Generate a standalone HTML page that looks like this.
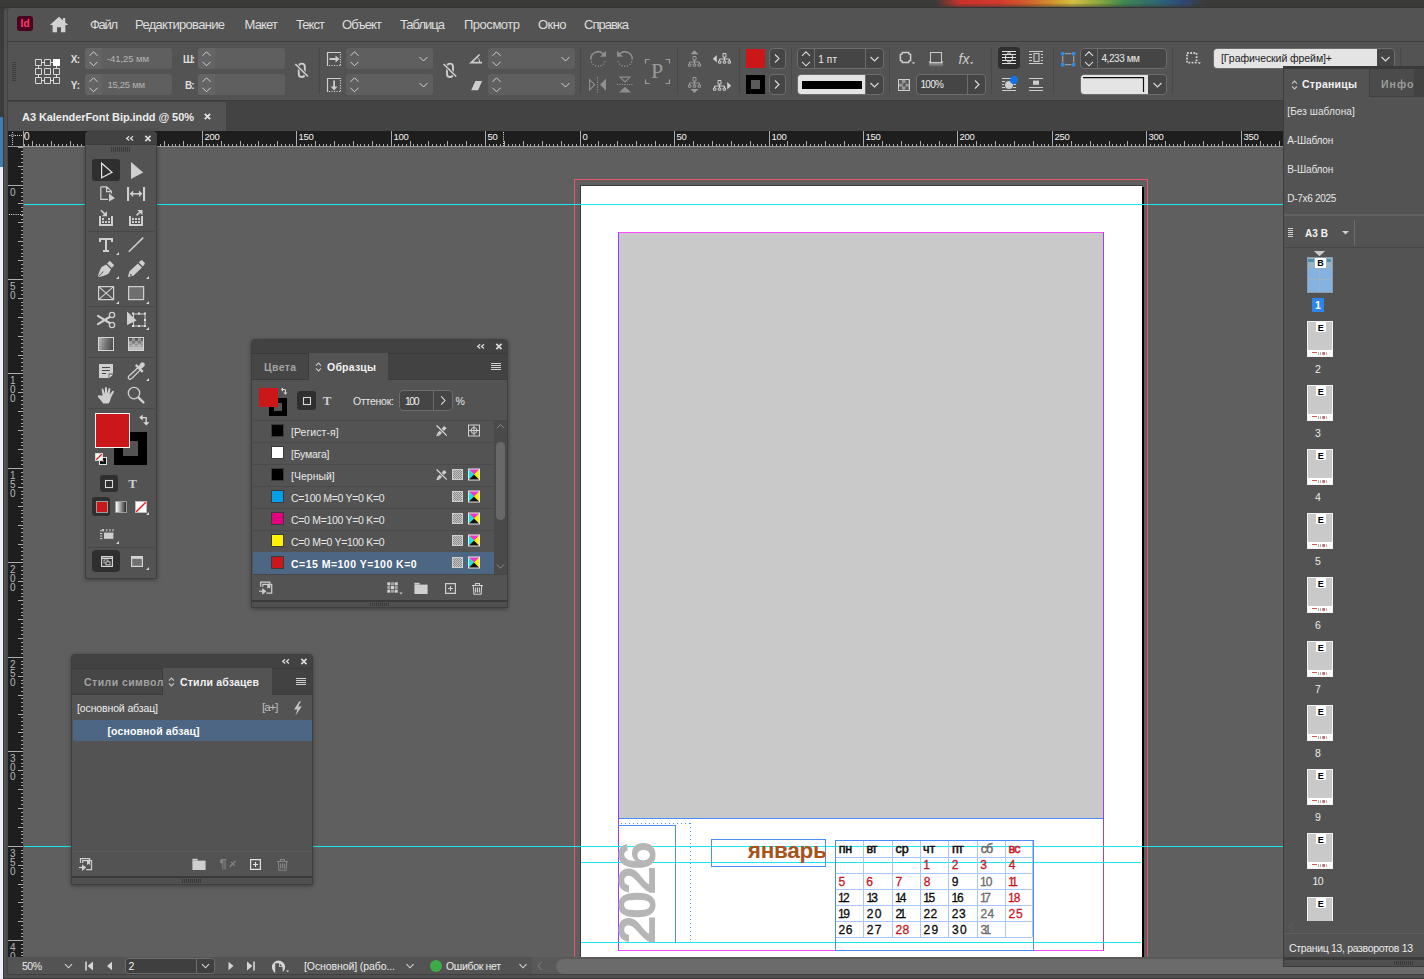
<!DOCTYPE html>
<html lang="ru"><head><meta charset="utf-8"><title>A3 KalenderFont Bip.indd @ 50%</title>
<style>
html,body{margin:0;padding:0;}
body{width:1424px;height:979px;overflow:hidden;background:#3b3b39;font-family:"Liberation Sans",sans-serif;}
#root{position:relative;width:1424px;height:979px;overflow:hidden;}
#root div,#root span.t,#root svg{position:absolute;box-sizing:border-box;}
span.t{white-space:pre;}
svg{overflow:visible;}

</style></head>
<body>
<div id="root">
<!-- sec_base -->
<div style="left:0px;top:0px;width:1424px;height:9px;background:#3a3a38;"></div>
<div style="left:935px;top:0px;width:270px;height:8px;background:linear-gradient(90deg,rgba(58,58,56,0) 0%,#d83028 9%,#e23a2c 24%,#e0602c 34%,#e0982e 43%,#e2cc40 51%,#98b440 60%,#3f8f50 70%,#2c6c78 82%,#2c4c80 91%,rgba(58,58,56,0) 100%);opacity:.92;"></div>
<div style="left:935px;top:3px;width:270px;height:5px;background:linear-gradient(180deg,rgba(58,58,56,0),rgba(58,58,56,.75));"></div>
<div style="left:0px;top:7px;width:1424px;height:1px;background:#333;"></div>
<div style="left:0px;top:117px;width:4px;height:50px;background:#3f7db3;"></div>
<div style="left:0px;top:167px;width:4px;height:812px;background:#eef1fa;"></div>
<div style="left:3px;top:8px;width:1421px;height:971px;background:#535353;border-top-left-radius:7px;border-left:1px solid #3a3a3a;"></div>
<div style="left:4px;top:8px;width:4px;height:971px;background:#505050;border-top-left-radius:7px;border-right:1px solid #434343;"></div>
<div style="left:4px;top:975px;width:1420px;height:4px;background:#505050;"></div>
<div style="left:3px;top:978px;width:1421px;height:1px;background:#383838;"></div>
<div style="left:17px;top:16px;width:16px;height:15px;background:#4a021f;border-radius:3px;"></div>
<span class="t" style="left:20.5px;top:16.5px;font-size:10px;line-height:14px;font-weight:700;color:#ff3f6c;letter-spacing:0.109px;">Id</span>
<svg style="left:49px;top:16px" width="20" height="17" viewBox="0 0 20 17"><path d="M10 0.8 L0.8 9 H3.6 V16.2 H8 V11.2 H12 V16.2 H16.4 V9 H19.2 Z" fill="#d2d2d2"/><rect x="14" y="2" width="2.2" height="4" fill="#d2d2d2"/></svg>
<span class="t" style="left:90px;top:15.8px;font-size:13px;line-height:17px;color:#dedede;letter-spacing:-1.323px;">Файл</span>
<span class="t" style="left:135px;top:15.8px;font-size:13px;line-height:17px;color:#dedede;letter-spacing:-0.695px;">Редактирование</span>
<span class="t" style="left:244.5px;top:15.8px;font-size:13px;line-height:17px;color:#dedede;letter-spacing:-0.824px;">Макет</span>
<span class="t" style="left:296px;top:15.8px;font-size:13px;line-height:17px;color:#dedede;letter-spacing:-0.934px;">Текст</span>
<span class="t" style="left:342px;top:15.8px;font-size:13px;line-height:17px;color:#dedede;letter-spacing:-0.856px;">Объект</span>
<span class="t" style="left:400px;top:15.8px;font-size:13px;line-height:17px;color:#dedede;letter-spacing:-0.997px;">Таблица</span>
<span class="t" style="left:464px;top:15.8px;font-size:13px;line-height:17px;color:#dedede;letter-spacing:-0.482px;">Просмотр</span>
<span class="t" style="left:538px;top:15.8px;font-size:13px;line-height:17px;color:#dedede;letter-spacing:-0.573px;">Окно</span>
<span class="t" style="left:584px;top:15.8px;font-size:13px;line-height:17px;color:#dedede;letter-spacing:-1.0px;">Справка</span>
<div style="left:7px;top:41px;width:1417px;height:1px;background:#3d3d3d;"></div>
<!-- sec_doc -->
<div style="left:7px;top:101px;width:1417px;height:30px;background:#434343;"></div>
<div style="left:7px;top:100px;width:1417px;height:1px;background:#3d3d3d;"></div>
<div style="left:8px;top:102px;width:218px;height:29px;background:#535353;"></div>
<span class="t" style="left:22px;top:110.0px;font-size:11px;line-height:15px;font-weight:700;color:#ececec;letter-spacing:-0.066px;">A3 KalenderFont Bip.indd @ 50%</span>
<svg style="left:203.6px;top:112.5px" width="7" height="7" viewBox="0 0 7 7"><path d="M0.8 0.8L6.2 6.2M6.2 0.8L0.8 6.2" stroke="#e4e4e4" stroke-width="1.7"/></svg>
<div style="left:8px;top:131px;width:1275px;height:826px;background:#5f5f5f;"></div>
<div style="left:23px;top:147px;width:1260px;height:810px;overflow:hidden;"><div style="left:1118px;top:40px;width:3px;height:790px;background:#000;"></div><div style="left:557px;top:38px;width:562px;height:800px;background:#fff;border-top:1px solid #3a3a3a;border-left:1px solid #3a3a3a;"></div><div style="left:596px;top:86px;width:485px;height:585px;background:#c9c9c9;"></div><div style="left:551px;top:32px;width:574px;height:800px;border:1px solid #e9566b;border-bottom:none;"></div><div style="left:595px;top:85px;width:486px;height:719px;border-top:1px solid #ff4bff;border-bottom:1px solid #ff4bff;border-left:1px solid #9a3bff;border-right:1px solid #9a3bff;"></div><div style="left:596px;top:671px;width:484px;height:1px;background:#4b8dff;"></div><div style="left:1px;top:57px;width:1259px;height:1px;background:#16e9f3;"></div><div style="left:1px;top:699px;width:1259px;height:1px;background:#16e9f3;"></div><div style="left:558px;top:715px;width:560px;height:1px;background:#16e9f3;"></div><div style="left:558px;top:795px;width:560px;height:1px;background:#16e9f3;"></div><div style="left:595px;top:678px;width:58px;height:118px;border:1px solid #4b8dff;border-left:none;border-bottom:none;"></div><div style="left:598px;top:676px;width:70px;height:1px;background:repeating-linear-gradient(90deg,#4b8dff 0 1px,transparent 1px 4px);"></div><div style="left:667px;top:676px;width:1px;height:118px;background:repeating-linear-gradient(180deg,#4b8dff 0 1px,transparent 1px 4px);"></div><div style="left:688px;top:692px;width:115px;height:28px;border:1px solid #4b8dff;"></div><svg style="left:0;top:0" width="1259" height="810"><path d="M840.5 693.5V790.3M869.5 693.5V790.3M897.5 693.5V790.3M925.5 693.5V790.3M954.5 693.5V790.3M982.5 693.5V790.3M812.5 710.5H1008.5M812.5 726.5H1008.5M812.5 742.5H1008.5M812.5 758.5H1008.5M812.5 774.5H1008.5M812.5 790.5H1008.5M1009.5 693.5V790.3" stroke="#a8c6fb" stroke-width="1" fill="none"/></svg><div style="left:812px;top:693px;width:199px;height:111px;border:1px solid #4b8dff;"></div><span class="t" style="left:815.8px;top:694.35px;font-size:12.5px;line-height:16.5px;color:#0a0a0a;letter-spacing:-0.372px;-webkit-text-stroke:.5px;">пн</span><span class="t" style="left:843.5px;top:694.35px;font-size:12.5px;line-height:16.5px;color:#0a0a0a;letter-spacing:-0.994px;-webkit-text-stroke:.5px;">вт</span><span class="t" style="left:872.6px;top:694.35px;font-size:12.5px;line-height:16.5px;color:#0a0a0a;letter-spacing:-0.003px;-webkit-text-stroke:.5px;">ср</span><span class="t" style="left:900.1px;top:694.35px;font-size:12.5px;line-height:16.5px;color:#0a0a0a;letter-spacing:-0.05px;-webkit-text-stroke:.5px;">чт</span><span class="t" style="left:929.1px;top:694.35px;font-size:12.5px;line-height:16.5px;color:#0a0a0a;letter-spacing:-0.9px;-webkit-text-stroke:.5px;">пт</span><span class="t" style="left:957.7px;top:694.35px;font-size:12.5px;line-height:16.5px;color:#6b6b6b;letter-spacing:-1.022px;-webkit-text-stroke:.5px;">сб</span><span class="t" style="left:985.4px;top:694.35px;font-size:12.5px;line-height:16.5px;color:#c5161d;letter-spacing:-0.566px;-webkit-text-stroke:.5px;">вс</span><span class="t" style="left:900.3px;top:710.4px;font-size:12px;line-height:16px;color:#c5161d;letter-spacing:0px;-webkit-text-stroke:.3px;">1</span><span class="t" style="left:928.8px;top:710.4px;font-size:12px;line-height:16px;color:#c5161d;letter-spacing:0px;-webkit-text-stroke:.3px;">2</span><span class="t" style="left:957.22px;top:710.4px;font-size:12px;line-height:16px;color:#c5161d;letter-spacing:0px;-webkit-text-stroke:.3px;">3</span><span class="t" style="left:985.7px;top:710.4px;font-size:12px;line-height:16px;color:#c5161d;letter-spacing:0px;-webkit-text-stroke:.3px;">4</span><span class="t" style="left:815.52px;top:727.0px;font-size:12px;line-height:16px;color:#c5161d;letter-spacing:0px;-webkit-text-stroke:.3px;">5</span><span class="t" style="left:843.2px;top:727.0px;font-size:12px;line-height:16px;color:#c5161d;letter-spacing:0px;-webkit-text-stroke:.3px;">6</span><span class="t" style="left:872.4px;top:727.0px;font-size:12px;line-height:16px;color:#c5161d;letter-spacing:0px;-webkit-text-stroke:.3px;">7</span><span class="t" style="left:900.66px;top:727.0px;font-size:12px;line-height:16px;color:#c5161d;letter-spacing:0px;-webkit-text-stroke:.3px;">8</span><span class="t" style="left:928.86px;top:727.0px;font-size:12px;line-height:16px;color:#0a0a0a;letter-spacing:0px;-webkit-text-stroke:.3px;">9</span><span class="t" style="left:957.1px;top:727.0px;font-size:12px;line-height:16px;color:#6b6b6b;letter-spacing:-0.95px;-webkit-text-stroke:.3px;">10</span><span class="t" style="left:985.1px;top:727.0px;font-size:12px;line-height:16px;color:#c5161d;letter-spacing:-2.6px;-webkit-text-stroke:.3px;">11</span><span class="t" style="left:815.1px;top:742.7px;font-size:12px;line-height:16px;color:#0a0a0a;letter-spacing:-1.83px;-webkit-text-stroke:.3px;">12</span><span class="t" style="left:843.4px;top:742.7px;font-size:12px;line-height:16px;color:#0a0a0a;letter-spacing:-1.89px;-webkit-text-stroke:.3px;">13</span><span class="t" style="left:872.1px;top:742.7px;font-size:12px;line-height:16px;color:#0a0a0a;letter-spacing:-2.07px;-webkit-text-stroke:.3px;">14</span><span class="t" style="left:900.3px;top:742.7px;font-size:12px;line-height:16px;color:#0a0a0a;letter-spacing:-1.45px;-webkit-text-stroke:.3px;">15</span><span class="t" style="left:928.5px;top:742.7px;font-size:12px;line-height:16px;color:#0a0a0a;letter-spacing:-1.29px;-webkit-text-stroke:.3px;">16</span><span class="t" style="left:957.1px;top:742.7px;font-size:12px;line-height:16px;color:#6b6b6b;letter-spacing:-2.43px;-webkit-text-stroke:.3px;">17</span><span class="t" style="left:985.1px;top:742.7px;font-size:12px;line-height:16px;color:#c5161d;letter-spacing:-0.95px;-webkit-text-stroke:.3px;">18</span><span class="t" style="left:815.1px;top:758.5px;font-size:12px;line-height:16px;color:#0a0a0a;letter-spacing:-1.49px;-webkit-text-stroke:.3px;">19</span><span class="t" style="left:843.7px;top:758.5px;font-size:12px;line-height:16px;color:#0a0a0a;letter-spacing:1.45px;-webkit-text-stroke:.3px;">20</span><span class="t" style="left:872.4px;top:758.5px;font-size:12px;line-height:16px;color:#0a0a0a;letter-spacing:-2.6px;-webkit-text-stroke:.3px;">21</span><span class="t" style="left:900.6px;top:758.5px;font-size:12px;line-height:16px;color:#0a0a0a;letter-spacing:0.27px;-webkit-text-stroke:.3px;">22</span><span class="t" style="left:928.8px;top:758.5px;font-size:12px;line-height:16px;color:#0a0a0a;letter-spacing:0.41px;-webkit-text-stroke:.3px;">23</span><span class="t" style="left:957.4px;top:758.5px;font-size:12px;line-height:16px;color:#6b6b6b;letter-spacing:0.43px;-webkit-text-stroke:.3px;">24</span><span class="t" style="left:985.4px;top:758.5px;font-size:12px;line-height:16px;color:#c5161d;letter-spacing:0.95px;-webkit-text-stroke:.3px;">25</span><span class="t" style="left:815.4px;top:774.5px;font-size:12px;line-height:16px;color:#0a0a0a;letter-spacing:0.81px;-webkit-text-stroke:.3px;">26</span><span class="t" style="left:843.7px;top:774.5px;font-size:12px;line-height:16px;color:#0a0a0a;letter-spacing:1.47px;-webkit-text-stroke:.3px;">27</span><span class="t" style="left:872.4px;top:774.5px;font-size:12px;line-height:16px;color:#c5161d;letter-spacing:0.55px;-webkit-text-stroke:.3px;">28</span><span class="t" style="left:900.6px;top:774.5px;font-size:12px;line-height:16px;color:#0a0a0a;letter-spacing:1.21px;-webkit-text-stroke:.3px;">29</span><span class="t" style="left:928.92px;top:774.5px;font-size:12px;line-height:16px;color:#0a0a0a;letter-spacing:1.43px;-webkit-text-stroke:.3px;">30</span><span class="t" style="left:957.52px;top:774.5px;font-size:12px;line-height:16px;color:#6b6b6b;letter-spacing:-2.6px;-webkit-text-stroke:.3px;">31</span><span class="t" style="left:724.8px;top:691.15px;font-size:22.5px;line-height:26.5px;font-weight:700;color:#a8521b;letter-spacing:-0.269px;">январь</span><div style="left:596px;top:696px;width:38px;height:102px;"><span class="t" style="left:0;top:0;transform-origin:0 0;transform:translate(0,101px) rotate(-90deg);font-size:51.5px;line-height:37px;font-weight:700;color:#b6b6b6;letter-spacing:-3.859px;">2026</span></div></div>
<div style="left:8px;top:131px;width:1275px;height:16px;background:#1e1e1e;"></div>
<div style="left:8px;top:147px;width:15px;height:810px;background:#1e1e1e;"></div>
<div style="left:8px;top:146px;width:1275px;height:1px;background:#9a9a9a;"></div>
<svg style="left:0;top:0" width="1424" height="150"><path d="M24.5 144.0V146.5M28.5 144.0V146.5M32.5 141.0V146.5M36.5 144.0V146.5M39.5 144.0V146.5M43.5 144.0V146.5M47.5 144.0V146.5M51.5 141.0V146.5M54.5 144.0V146.5M58.5 144.0V146.5M62.5 144.0V146.5M66.5 144.0V146.5M70.5 141.0V146.5M73.5 144.0V146.5M77.5 144.0V146.5M81.5 144.0V146.5M85.5 144.0V146.5M88.5 141.0V146.5M92.5 144.0V146.5M96.5 144.0V146.5M100.5 144.0V146.5M104.5 144.0V146.5M107.5 131V146.5M111.5 144.0V146.5M115.5 144.0V146.5M119.5 144.0V146.5M122.5 144.0V146.5M126.5 141.0V146.5M130.5 144.0V146.5M134.5 144.0V146.5M138.5 144.0V146.5M141.5 144.0V146.5M145.5 141.0V146.5M149.5 144.0V146.5M153.5 144.0V146.5M156.5 144.0V146.5M160.5 144.0V146.5M164.5 141.0V146.5M168.5 144.0V146.5M172.5 144.0V146.5M175.5 144.0V146.5M179.5 144.0V146.5M183.5 141.0V146.5M187.5 144.0V146.5M190.5 144.0V146.5M194.5 144.0V146.5M198.5 144.0V146.5M202.5 131V146.5M206.5 144.0V146.5M209.5 144.0V146.5M213.5 144.0V146.5M217.5 144.0V146.5M221.5 141.0V146.5M224.5 144.0V146.5M228.5 144.0V146.5M232.5 144.0V146.5M236.5 144.0V146.5M240.5 141.0V146.5M243.5 144.0V146.5M247.5 144.0V146.5M251.5 144.0V146.5M255.5 144.0V146.5M258.5 141.0V146.5M262.5 144.0V146.5M266.5 144.0V146.5M270.5 144.0V146.5M274.5 144.0V146.5M277.5 141.0V146.5M281.5 144.0V146.5M285.5 144.0V146.5M289.5 144.0V146.5M292.5 144.0V146.5M296.5 131V146.5M300.5 144.0V146.5M304.5 144.0V146.5M308.5 144.0V146.5M311.5 144.0V146.5M315.5 141.0V146.5M319.5 144.0V146.5M323.5 144.0V146.5M326.5 144.0V146.5M330.5 144.0V146.5M334.5 141.0V146.5M338.5 144.0V146.5M342.5 144.0V146.5M345.5 144.0V146.5M349.5 144.0V146.5M353.5 141.0V146.5M357.5 144.0V146.5M360.5 144.0V146.5M364.5 144.0V146.5M368.5 144.0V146.5M372.5 141.0V146.5M376.5 144.0V146.5M379.5 144.0V146.5M383.5 144.0V146.5M387.5 144.0V146.5M391.5 131V146.5M394.5 144.0V146.5M398.5 144.0V146.5M402.5 144.0V146.5M406.5 144.0V146.5M410.5 141.0V146.5M413.5 144.0V146.5M417.5 144.0V146.5M421.5 144.0V146.5M425.5 144.0V146.5M428.5 141.0V146.5M432.5 144.0V146.5M436.5 144.0V146.5M440.5 144.0V146.5M444.5 144.0V146.5M447.5 141.0V146.5M451.5 144.0V146.5M455.5 144.0V146.5M459.5 144.0V146.5M462.5 144.0V146.5M466.5 141.0V146.5M470.5 144.0V146.5M474.5 144.0V146.5M478.5 144.0V146.5M481.5 144.0V146.5M485.5 131V146.5M489.5 144.0V146.5M493.5 144.0V146.5M496.5 144.0V146.5M500.5 144.0V146.5M504.5 141.0V146.5M508.5 144.0V146.5M512.5 144.0V146.5M515.5 144.0V146.5M519.5 144.0V146.5M523.5 141.0V146.5M527.5 144.0V146.5M530.5 144.0V146.5M534.5 144.0V146.5M538.5 144.0V146.5M542.5 141.0V146.5M546.5 144.0V146.5M549.5 144.0V146.5M553.5 144.0V146.5M557.5 144.0V146.5M561.5 141.0V146.5M564.5 144.0V146.5M568.5 144.0V146.5M572.5 144.0V146.5M576.5 144.0V146.5M580.5 131V146.5M583.5 144.0V146.5M587.5 144.0V146.5M591.5 144.0V146.5M595.5 144.0V146.5M598.5 141.0V146.5M602.5 144.0V146.5M606.5 144.0V146.5M610.5 144.0V146.5M614.5 144.0V146.5M617.5 141.0V146.5M621.5 144.0V146.5M625.5 144.0V146.5M629.5 144.0V146.5M632.5 144.0V146.5M636.5 141.0V146.5M640.5 144.0V146.5M644.5 144.0V146.5M648.5 144.0V146.5M651.5 144.0V146.5M655.5 141.0V146.5M659.5 144.0V146.5M663.5 144.0V146.5M666.5 144.0V146.5M670.5 144.0V146.5M674.5 131V146.5M678.5 144.0V146.5M682.5 144.0V146.5M685.5 144.0V146.5M689.5 144.0V146.5M693.5 141.0V146.5M697.5 144.0V146.5M700.5 144.0V146.5M704.5 144.0V146.5M708.5 144.0V146.5M712.5 141.0V146.5M716.5 144.0V146.5M719.5 144.0V146.5M723.5 144.0V146.5M727.5 144.0V146.5M731.5 141.0V146.5M734.5 144.0V146.5M738.5 144.0V146.5M742.5 144.0V146.5M746.5 144.0V146.5M750.5 141.0V146.5M753.5 144.0V146.5M757.5 144.0V146.5M761.5 144.0V146.5M765.5 144.0V146.5M769.5 131V146.5M772.5 144.0V146.5M776.5 144.0V146.5M780.5 144.0V146.5M784.5 144.0V146.5M787.5 141.0V146.5M791.5 144.0V146.5M795.5 144.0V146.5M799.5 144.0V146.5M803.5 144.0V146.5M806.5 141.0V146.5M810.5 144.0V146.5M814.5 144.0V146.5M818.5 144.0V146.5M821.5 144.0V146.5M825.5 141.0V146.5M829.5 144.0V146.5M833.5 144.0V146.5M837.5 144.0V146.5M840.5 144.0V146.5M844.5 141.0V146.5M848.5 144.0V146.5M852.5 144.0V146.5M855.5 144.0V146.5M859.5 144.0V146.5M863.5 131V146.5M867.5 144.0V146.5M871.5 144.0V146.5M874.5 144.0V146.5M878.5 144.0V146.5M882.5 141.0V146.5M886.5 144.0V146.5M889.5 144.0V146.5M893.5 144.0V146.5M897.5 144.0V146.5M901.5 141.0V146.5M905.5 144.0V146.5M908.5 144.0V146.5M912.5 144.0V146.5M916.5 144.0V146.5M920.5 141.0V146.5M923.5 144.0V146.5M927.5 144.0V146.5M931.5 144.0V146.5M935.5 144.0V146.5M939.5 141.0V146.5M942.5 144.0V146.5M946.5 144.0V146.5M950.5 144.0V146.5M954.5 144.0V146.5M957.5 131V146.5M961.5 144.0V146.5M965.5 144.0V146.5M969.5 144.0V146.5M973.5 144.0V146.5M976.5 141.0V146.5M980.5 144.0V146.5M984.5 144.0V146.5M988.5 144.0V146.5M991.5 144.0V146.5M995.5 141.0V146.5M999.5 144.0V146.5M1003.5 144.0V146.5M1007.5 144.0V146.5M1010.5 144.0V146.5M1014.5 141.0V146.5M1018.5 144.0V146.5M1022.5 144.0V146.5M1025.5 144.0V146.5M1029.5 144.0V146.5M1033.5 141.0V146.5M1037.5 144.0V146.5M1041.5 144.0V146.5M1044.5 144.0V146.5M1048.5 144.0V146.5M1052.5 131V146.5M1056.5 144.0V146.5M1059.5 144.0V146.5M1063.5 144.0V146.5M1067.5 144.0V146.5M1071.5 141.0V146.5M1075.5 144.0V146.5M1078.5 144.0V146.5M1082.5 144.0V146.5M1086.5 144.0V146.5M1090.5 141.0V146.5M1093.5 144.0V146.5M1097.5 144.0V146.5M1101.5 144.0V146.5M1105.5 144.0V146.5M1109.5 141.0V146.5M1112.5 144.0V146.5M1116.5 144.0V146.5M1120.5 144.0V146.5M1124.5 144.0V146.5M1127.5 141.0V146.5M1131.5 144.0V146.5M1135.5 144.0V146.5M1139.5 144.0V146.5M1143.5 144.0V146.5M1146.5 131V146.5M1150.5 144.0V146.5M1154.5 144.0V146.5M1158.5 144.0V146.5M1161.5 144.0V146.5M1165.5 141.0V146.5M1169.5 144.0V146.5M1173.5 144.0V146.5M1177.5 144.0V146.5M1180.5 144.0V146.5M1184.5 141.0V146.5M1188.5 144.0V146.5M1192.5 144.0V146.5M1195.5 144.0V146.5M1199.5 144.0V146.5M1203.5 141.0V146.5M1207.5 144.0V146.5M1211.5 144.0V146.5M1214.5 144.0V146.5M1218.5 144.0V146.5M1222.5 141.0V146.5M1226.5 144.0V146.5M1229.5 144.0V146.5M1233.5 144.0V146.5M1237.5 144.0V146.5M1241.5 131V146.5M1245.5 144.0V146.5M1248.5 144.0V146.5M1252.5 144.0V146.5M1256.5 144.0V146.5M1260.5 141.0V146.5M1263.5 144.0V146.5M1267.5 144.0V146.5M1271.5 144.0V146.5M1275.5 144.0V146.5M1279.5 141.0V146.5" stroke="#adadad" stroke-width="1" fill="none"/></svg><span class="t" style="left:109.5px;top:130.35px;font-size:9.5px;line-height:13.5px;color:#f4f4f4;letter-spacing:-0.23px;">250</span><span class="t" style="left:204.5px;top:130.35px;font-size:9.5px;line-height:13.5px;color:#f4f4f4;letter-spacing:-0.23px;">200</span><span class="t" style="left:298.5px;top:130.35px;font-size:9.5px;line-height:13.5px;color:#f4f4f4;letter-spacing:-0.23px;">150</span><span class="t" style="left:393.5px;top:130.35px;font-size:9.5px;line-height:13.5px;color:#f4f4f4;letter-spacing:-0.23px;">100</span><span class="t" style="left:487.5px;top:130.35px;font-size:9.5px;line-height:13.5px;color:#f4f4f4;letter-spacing:-0.378px;">50</span><span class="t" style="left:582.5px;top:130.35px;font-size:9.5px;line-height:13.5px;color:#f4f4f4;letter-spacing:0px;">0</span><span class="t" style="left:676.5px;top:130.35px;font-size:9.5px;line-height:13.5px;color:#f4f4f4;letter-spacing:-0.378px;">50</span><span class="t" style="left:771.5px;top:130.35px;font-size:9.5px;line-height:13.5px;color:#f4f4f4;letter-spacing:-0.23px;">100</span><span class="t" style="left:865.5px;top:130.35px;font-size:9.5px;line-height:13.5px;color:#f4f4f4;letter-spacing:-0.23px;">150</span><span class="t" style="left:959.5px;top:130.35px;font-size:9.5px;line-height:13.5px;color:#f4f4f4;letter-spacing:-0.23px;">200</span><span class="t" style="left:1054.5px;top:130.35px;font-size:9.5px;line-height:13.5px;color:#f4f4f4;letter-spacing:-0.23px;">250</span><span class="t" style="left:1148.5px;top:130.35px;font-size:9.5px;line-height:13.5px;color:#f4f4f4;letter-spacing:-0.23px;">300</span><span class="t" style="left:1243.5px;top:130.35px;font-size:9.5px;line-height:13.5px;color:#f4f4f4;letter-spacing:-0.23px;">350</span><div style="left:24px;top:131px;width:8px;height:10px;overflow:hidden;"><span class="t" style="left:-5px;top:-1.4000000000000004px;font-size:10px;line-height:14px;color:#f4f4f4;letter-spacing:-0.525px;">00</span></div>
<svg style="left:0;top:0" width="30" height="979"><path d="M18 147.5H23M21 151.5H23M21 154.5H23M21 158.5H23M21 162.5H23M18 166.5H23M21 169.5H23M21 173.5H23M21 177.5H23M21 181.5H23M8 185.5H23M21 188.5H23M21 192.5H23M21 196.5H23M21 200.5H23M18 203.5H23M21 207.5H23M21 211.5H23M21 215.5H23M21 219.5H23M18 222.5H23M21 226.5H23M21 230.5H23M21 234.5H23M21 237.5H23M18 241.5H23M21 245.5H23M21 249.5H23M21 253.5H23M21 256.5H23M18 260.5H23M21 264.5H23M21 268.5H23M21 271.5H23M21 275.5H23M8 279.5H23M21 283.5H23M21 287.5H23M21 290.5H23M21 294.5H23M18 298.5H23M21 302.5H23M21 305.5H23M21 309.5H23M21 313.5H23M18 317.5H23M21 321.5H23M21 324.5H23M21 328.5H23M21 332.5H23M18 336.5H23M21 339.5H23M21 343.5H23M21 347.5H23M21 351.5H23M18 355.5H23M21 358.5H23M21 362.5H23M21 366.5H23M21 370.5H23M8 373.5H23M21 377.5H23M21 381.5H23M21 385.5H23M21 389.5H23M18 392.5H23M21 396.5H23M21 400.5H23M21 404.5H23M21 408.5H23M18 411.5H23M21 415.5H23M21 419.5H23M21 423.5H23M21 426.5H23M18 430.5H23M21 434.5H23M21 438.5H23M21 442.5H23M21 445.5H23M18 449.5H23M21 453.5H23M21 457.5H23M21 460.5H23M21 464.5H23M8 468.5H23M21 472.5H23M21 476.5H23M21 479.5H23M21 483.5H23M18 487.5H23M21 491.5H23M21 494.5H23M21 498.5H23M21 502.5H23M18 506.5H23M21 510.5H23M21 513.5H23M21 517.5H23M21 521.5H23M18 525.5H23M21 528.5H23M21 532.5H23M21 536.5H23M21 540.5H23M18 544.5H23M21 547.5H23M21 551.5H23M21 555.5H23M21 559.5H23M8 562.5H23M21 566.5H23M21 570.5H23M21 574.5H23M21 578.5H23M18 581.5H23M21 585.5H23M21 589.5H23M21 593.5H23M21 596.5H23M18 600.5H23M21 604.5H23M21 608.5H23M21 612.5H23M21 615.5H23M18 619.5H23M21 623.5H23M21 627.5H23M21 630.5H23M21 634.5H23M18 638.5H23M21 642.5H23M21 646.5H23M21 649.5H23M21 653.5H23M8 657.5H23M21 661.5H23M21 664.5H23M21 668.5H23M21 672.5H23M18 676.5H23M21 680.5H23M21 683.5H23M21 687.5H23M21 691.5H23M18 695.5H23M21 698.5H23M21 702.5H23M21 706.5H23M21 710.5H23M18 714.5H23M21 717.5H23M21 721.5H23M21 725.5H23M21 729.5H23M18 732.5H23M21 736.5H23M21 740.5H23M21 744.5H23M21 748.5H23M8 751.5H23M21 755.5H23M21 759.5H23M21 763.5H23M21 766.5H23M18 770.5H23M21 774.5H23M21 778.5H23M21 782.5H23M21 785.5H23M18 789.5H23M21 793.5H23M21 797.5H23M21 800.5H23M21 804.5H23M18 808.5H23M21 812.5H23M21 816.5H23M21 819.5H23M21 823.5H23M18 827.5H23M21 831.5H23M21 834.5H23M21 838.5H23M21 842.5H23M8 846.5H23M21 850.5H23M21 853.5H23M21 857.5H23M21 861.5H23M18 865.5H23M21 868.5H23M21 872.5H23M21 876.5H23M21 880.5H23M18 884.5H23M21 887.5H23M21 891.5H23M21 895.5H23M21 899.5H23M18 902.5H23M21 906.5H23M21 910.5H23M21 914.5H23M21 918.5H23M18 921.5H23M21 925.5H23M21 929.5H23M21 933.5H23M21 936.5H23M8 940.5H23M21 944.5H23M21 948.5H23M21 952.5H23M21 955.5H23" stroke="#adadad" stroke-width="1" fill="none"/></svg><span class="t" style="left:10px;top:185.5px;font-size:10px;line-height:14px;color:#b4b8bd;letter-spacing:0px;">0</span><span class="t" style="left:10px;top:279.5px;font-size:10px;line-height:14px;color:#b4b8bd;letter-spacing:0px;">5</span><span class="t" style="left:10px;top:288.5px;font-size:10px;line-height:14px;color:#b4b8bd;letter-spacing:0px;">0</span><span class="t" style="left:10px;top:373.5px;font-size:10px;line-height:14px;color:#b4b8bd;letter-spacing:0px;">1</span><span class="t" style="left:10px;top:382.5px;font-size:10px;line-height:14px;color:#b4b8bd;letter-spacing:0px;">0</span><span class="t" style="left:10px;top:391.5px;font-size:10px;line-height:14px;color:#b4b8bd;letter-spacing:0px;">0</span><span class="t" style="left:10px;top:468.5px;font-size:10px;line-height:14px;color:#b4b8bd;letter-spacing:0px;">1</span><span class="t" style="left:10px;top:477.5px;font-size:10px;line-height:14px;color:#b4b8bd;letter-spacing:0px;">5</span><span class="t" style="left:10px;top:486.5px;font-size:10px;line-height:14px;color:#b4b8bd;letter-spacing:0px;">0</span><span class="t" style="left:10px;top:562.5px;font-size:10px;line-height:14px;color:#b4b8bd;letter-spacing:0px;">2</span><span class="t" style="left:10px;top:571.5px;font-size:10px;line-height:14px;color:#b4b8bd;letter-spacing:0px;">0</span><span class="t" style="left:10px;top:580.5px;font-size:10px;line-height:14px;color:#b4b8bd;letter-spacing:0px;">0</span><span class="t" style="left:10px;top:657.5px;font-size:10px;line-height:14px;color:#b4b8bd;letter-spacing:0px;">2</span><span class="t" style="left:10px;top:666.5px;font-size:10px;line-height:14px;color:#b4b8bd;letter-spacing:0px;">5</span><span class="t" style="left:10px;top:675.5px;font-size:10px;line-height:14px;color:#b4b8bd;letter-spacing:0px;">0</span><span class="t" style="left:10px;top:751.5px;font-size:10px;line-height:14px;color:#b4b8bd;letter-spacing:0px;">3</span><span class="t" style="left:10px;top:760.5px;font-size:10px;line-height:14px;color:#b4b8bd;letter-spacing:0px;">0</span><span class="t" style="left:10px;top:769.5px;font-size:10px;line-height:14px;color:#b4b8bd;letter-spacing:0px;">0</span><span class="t" style="left:10px;top:846.5px;font-size:10px;line-height:14px;color:#b4b8bd;letter-spacing:0px;">3</span><span class="t" style="left:10px;top:855.5px;font-size:10px;line-height:14px;color:#b4b8bd;letter-spacing:0px;">5</span><span class="t" style="left:10px;top:864.5px;font-size:10px;line-height:14px;color:#b4b8bd;letter-spacing:0px;">0</span><span class="t" style="left:10px;top:940.5px;font-size:10px;line-height:14px;color:#b4b8bd;letter-spacing:0px;">4</span><span class="t" style="left:10px;top:949.5px;font-size:10px;line-height:14px;color:#b4b8bd;letter-spacing:0px;">0</span><span class="t" style="left:10px;top:958.5px;font-size:10px;line-height:14px;color:#b4b8bd;letter-spacing:0px;">0</span>
<div style="left:8px;top:131px;width:15px;height:15px;background:#1e1e1e;"></div>
<svg style="left:8px;top:131px" width="16" height="16"><path d="M1 4.5H15M4.5 1V14.5" stroke="#cfcfcf" stroke-width="1" stroke-dasharray="1 1"/><path d="M4.5 3L6 4.5L4.5 6L3 4.5Z" fill="#1e1e1e" stroke="#cfcfcf" stroke-width=".8"/></svg>
<div style="left:23px;top:131px;width:1px;height:15px;background:#a0a0a0;"></div>
<svg style="left:0;top:0" width="520" height="220"><path d="M9 214.5H23" stroke="#f0f0f0" stroke-width="1" stroke-dasharray="1 1.2"/><path d="M503.5 132V146" stroke="#f0f0f0" stroke-width="1" stroke-dasharray="1 1.2"/></svg>
<!-- sec_status -->
<div style="left:7px;top:957px;width:525px;height:18px;background:#535353;"></div>
<div style="left:532px;top:957px;width:892px;height:18px;background:#595959;"></div>
<div style="left:556px;top:959px;width:880px;height:15px;background:#6b6b6b;border-radius:8px;"></div>
<div style="left:7px;top:974px;width:1417px;height:1px;background:#3f3f3f;"></div>
<span class="t" style="left:22px;top:958.75px;font-size:10.5px;line-height:14.5px;color:#ececec;letter-spacing:-0.508px;">50%</span>
<div style="left:125px;top:958px;width:90px;height:16px;background:#3f3f3f;border:1px solid #6c6c6c;border-radius:3px;"></div>
<div style="left:196px;top:959px;width:1px;height:14px;background:#6c6c6c;"></div>
<span class="t" style="left:128.5px;top:958.75px;font-size:10.5px;line-height:14.5px;color:#f0f0f0;letter-spacing:0px;">2</span>
<span class="t" style="left:304px;top:958.75px;font-size:10.5px;line-height:14.5px;color:#ececec;letter-spacing:-0.093px;">[Основной] (рабо...</span>
<div style="left:430px;top:960px;width:12px;height:12px;background:#3cab48;border-radius:6px;"></div>
<span class="t" style="left:446px;top:958.75px;font-size:10.5px;line-height:14.5px;color:#ececec;letter-spacing:-0.325px;">Ошибок нет</span>
<svg style="left:0;top:0" width="1424" height="979"><path d="M65.0 964.2L68.5 967.8L72.0 964.2" stroke="#d6d6d6" fill="none" stroke-width="1.1"/><path d="M202.0 964.2L205.5 967.8L209.0 964.2" stroke="#d6d6d6" fill="none" stroke-width="1.1"/><path d="M406.5 964.2L410 967.8L413.5 964.2" stroke="#d6d6d6" fill="none" stroke-width="1.1"/><path d="M519.5 964.2L523 967.8L526.5 964.2" stroke="#d6d6d6" fill="none" stroke-width="1.1"/><path d="M86 961.5V970.5" stroke="#d6d6d6" stroke-width="1.6"/><path d="M93 961.5V970.5L87.6 966Z" fill="#d6d6d6"/><path d="M112 961.8V970.2L107 966Z" fill="#d6d6d6"/><path d="M228.5 961.8V970.2L233.5 966Z" fill="#d6d6d6"/><path d="M254 961.5V970.5" stroke="#d6d6d6" stroke-width="1.6"/><path d="M247 961.5V970.5L252.4 966Z" fill="#d6d6d6"/><path d="M273.6 971.6A6.6 6.6 0 1 1 283.4 971.6H282.6V967H279V963.2H275.2V972.4H274.2Z" fill="#d6d6d6"/><path d="M279.8 963.6L282.4 966.2H279.8Z" fill="#5c5c5c"/><path d="M286 970.4h3.2l-1.6 1.9z" fill="#d6d6d6"/><path d="M541.5 962L538.2 966L541.5 970" stroke="#7a7a7a" fill="none" stroke-width="1.1"/></svg>
<!-- sec_ctrl -->
<div style="left:7px;top:42px;width:1417px;height:58px;background:#535353;"></div>
<div style="left:7px;top:42px;width:1px;height:58px;background:#484848;"></div>
<div style="left:12px;top:62px;width:4px;height:20px;background:repeating-linear-gradient(180deg,#3c3c3c 0 1px,transparent 1px 2px);"></div>
<span class="t" style="left:70.8px;top:52.9px;font-size:10px;line-height:14px;font-weight:700;color:#dedede;letter-spacing:-0.6px;">X:</span>
<span class="t" style="left:70.8px;top:78.9px;font-size:10px;line-height:14px;font-weight:700;color:#dedede;letter-spacing:0.134px;">Y:</span>
<span class="t" style="left:183px;top:52.9px;font-size:10px;line-height:14px;font-weight:700;color:#dedede;letter-spacing:-1.191px;">Ш:</span>
<span class="t" style="left:185px;top:78.9px;font-size:10px;line-height:14px;font-weight:700;color:#dedede;letter-spacing:-1.062px;">В:</span>
<div style="left:85px;top:48px;width:87px;height:21px;background:#5f5f5f;border-radius:3px;"></div>
<div style="left:85px;top:48px;width:17px;height:21px;background:#646464;border-radius:3px 0 0 3px;"></div>
<div style="left:85px;top:74px;width:87px;height:21px;background:#5f5f5f;border-radius:3px;"></div>
<div style="left:85px;top:74px;width:17px;height:21px;background:#646464;border-radius:3px 0 0 3px;"></div>
<div style="left:198px;top:48px;width:87px;height:21px;background:#5f5f5f;border-radius:3px;"></div>
<div style="left:198px;top:48px;width:17px;height:21px;background:#646464;border-radius:3px 0 0 3px;"></div>
<div style="left:198px;top:74px;width:87px;height:21px;background:#5f5f5f;border-radius:3px;"></div>
<div style="left:198px;top:74px;width:17px;height:21px;background:#646464;border-radius:3px 0 0 3px;"></div>
<span class="t" style="left:107px;top:52.05px;font-size:9.5px;line-height:13.5px;color:#b4b4b4;letter-spacing:-0.08px;">-41,25 мм</span>
<span class="t" style="left:107.5px;top:78.05px;font-size:9.5px;line-height:13.5px;color:#b4b4b4;letter-spacing:-0.283px;">15,25 мм</span>
<div style="left:346px;top:48px;width:87px;height:21px;background:#5f5f5f;border-radius:3px;"></div>
<div style="left:346px;top:74px;width:87px;height:21px;background:#5f5f5f;border-radius:3px;"></div>
<div style="left:488px;top:48px;width:87px;height:21px;background:#5f5f5f;border-radius:3px;"></div>
<div style="left:488px;top:74px;width:87px;height:21px;background:#5f5f5f;border-radius:3px;"></div>
<span class="t" style="left:651px;top:58.0px;font-size:22px;line-height:26px;color:#9a9a9a;letter-spacing:0px;font-family:'Liberation Serif', serif;">P</span>
<div style="left:746px;top:49px;width:19px;height:19px;background:#cc171a;"></div>
<div style="left:746px;top:75px;width:19px;height:19px;background:#000;"></div>
<div style="left:751px;top:80px;width:9px;height:9px;background:#5b5b5b;"></div>
<div style="left:769px;top:48px;width:17px;height:21px;background:#454545;border:1px solid #6c6c6c;border-radius:4px;"></div>
<div style="left:769px;top:74px;width:17px;height:21px;background:#454545;border:1px solid #6c6c6c;border-radius:4px;"></div>
<div style="left:797px;top:48px;width:87px;height:21px;background:#454545;border:1px solid #6c6c6c;border-radius:4px;"></div>
<div style="left:814px;top:49px;width:1px;height:19px;background:#6c6c6c;"></div>
<div style="left:865px;top:49px;width:1px;height:19px;background:#6c6c6c;"></div>
<span class="t" style="left:818.3px;top:53.2px;font-size:10px;line-height:14px;color:#eaeaea;letter-spacing:0.119px;">1 пт</span>
<div style="left:797px;top:74px;width:87px;height:21px;background:#454545;border:1px solid #6c6c6c;border-radius:4px;"></div>
<div style="left:798px;top:75px;width:67px;height:19px;background:#e4e4e4;border-radius:3px 0 0 3px;"></div>
<div style="left:802px;top:81px;width:60px;height:8px;background:#000;"></div>
<div style="left:865px;top:75px;width:1px;height:19px;background:#6c6c6c;"></div>
<div style="left:928.5px;top:61px;width:14px;height:6px;background:linear-gradient(180deg,#bdbdbd,rgba(120,120,120,0));"></div>
<div style="left:930px;top:52px;width:12px;height:11px;background:#535353;border:1.5px solid #cdcdcd;"></div>
<span class="t" style="left:958.6px;top:49.5px;font-size:14px;line-height:18px;color:#cdcdcd;letter-spacing:0.109px;font-style:italic;">fx</span>
<div style="left:898px;top:79px;width:12px;height:12px;border:1px solid #cdcdcd;background:repeating-conic-gradient(#9a9a9a 0 25%,#5a5a5a 0 50%) 0 0/6.6px 6.6px;"></div>
<div style="left:916px;top:74px;width:70px;height:21px;background:#454545;border:1px solid #6c6c6c;border-radius:4px;"></div>
<div style="left:967px;top:75px;width:1px;height:19px;background:#6c6c6c;"></div>
<span class="t" style="left:920.5px;top:78.1px;font-size:10px;line-height:14px;color:#eaeaea;letter-spacing:-0.693px;">100%</span>
<div style="left:998px;top:47px;width:22px;height:22px;background:#2f2f2f;border-radius:4px;"></div>
<div style="left:1080px;top:48px;width:87px;height:21px;background:#454545;border:1px solid #6c6c6c;border-radius:4px;"></div>
<div style="left:1097px;top:49px;width:1px;height:19px;background:#6c6c6c;"></div>
<span class="t" style="left:1101.5px;top:52.2px;font-size:10px;line-height:14px;color:#eaeaea;letter-spacing:-0.438px;">4,233 мм</span>
<div style="left:1080px;top:74px;width:87px;height:21px;background:#454545;border:1px solid #6c6c6c;border-radius:4px;"></div>
<div style="left:1081px;top:75px;width:67px;height:19px;background:#e4e4e4;border-radius:3px 0 0 3px;"></div>
<div style="left:1213px;top:48px;width:182px;height:21px;background:#454545;border:1px solid #6c6c6c;border-radius:4px;"></div>
<div style="left:1214px;top:49px;width:163px;height:19px;background:#e4e4e4;border-radius:3px 0 0 3px;"></div>
<span class="t" style="left:1221px;top:51.25px;font-size:10.5px;line-height:14.5px;color:#1c1c1c;letter-spacing:-0.076px;">[Графический фрейм]+</span>
<svg style="left:0;top:0" width="1424" height="101"><path d="M35.5 59.5h6v6h-6zM44.5 59.5h6v6h-6zM35.5 68.5h6v6h-6zM44.5 68.5h6v6h-6zM53.5 68.5h6v6h-6zM35.5 77.5h6v6h-6zM44.5 77.5h6v6h-6zM53.5 77.5h6v6h-6zM41.5 62.5h3M50.5 62.5h3M41.5 80.5h3M50.5 80.5h3M38.5 65.5v3M38.5 74.5v3M56.5 65.5v3M56.5 74.5v3" stroke="#d6d6d6" fill="none" stroke-width="1" /><rect x="53" y="59" width="7" height="7" fill="#fff"/><path d="M89.5 55.8L93.5 51.8L97.5 55.8M89.5 61.8L93.5 65.8L97.5 61.8M89.5 81.8L93.5 77.8L97.5 81.8M89.5 87.8L93.5 91.8L97.5 87.8M202.5 55.8L206.5 51.8L210.5 55.8M202.5 61.8L206.5 65.8L210.5 61.8M202.5 81.8L206.5 77.8L210.5 81.8M202.5 87.8L206.5 91.8L210.5 87.8M350.5 55.8L354.5 51.8L358.5 55.8M350.5 61.8L354.5 65.8L358.5 61.8M419.5 57L423.5 61L427.5 57M350.5 81.8L354.5 77.8L358.5 81.8M350.5 87.8L354.5 91.8L358.5 87.8M419.5 83L423.5 87L427.5 83M492.5 55.8L496.5 51.8L500.5 55.8M492.5 61.8L496.5 65.8L500.5 61.8M561.5 57L565.5 61L569.5 57M492.5 81.8L496.5 77.8L500.5 81.8M492.5 87.8L496.5 91.8L500.5 87.8M561.5 83L565.5 87L569.5 83" stroke="#d2d2d2" fill="none" stroke-width="1" /><rect x="298.8" y="63.6" width="6" height="13.4" rx="3" fill="none" stroke="#cdcdcd" stroke-width="1.9"/><path d="M295.3 64L308.0 76.5" stroke="#535353" fill="none" stroke-width="3.2" /><path d="M295.3 64L308.0 76.5" stroke="#cdcdcd" fill="none" stroke-width="1.7" /><rect x="447" y="63.6" width="6" height="13.4" rx="3" fill="none" stroke="#cdcdcd" stroke-width="1.9"/><path d="M443.5 64L456.2 76.5" stroke="#535353" fill="none" stroke-width="3.2" /><path d="M443.5 64L456.2 76.5" stroke="#cdcdcd" fill="none" stroke-width="1.7" /><path d="M319.5 48V94" stroke="#494949" fill="none" stroke-width="1" /><path d="M580.5 48V94" stroke="#494949" fill="none" stroke-width="1" /><path d="M677.5 48V94" stroke="#494949" fill="none" stroke-width="1" /><path d="M739.5 48V94" stroke="#494949" fill="none" stroke-width="1" /><path d="M791.5 48V94" stroke="#494949" fill="none" stroke-width="1" /><path d="M889.5 48V94" stroke="#494949" fill="none" stroke-width="1" /><path d="M991.5 48V94" stroke="#494949" fill="none" stroke-width="1" /><path d="M1053.5 48V94" stroke="#494949" fill="none" stroke-width="1" /><path d="M1172.5 48V94" stroke="#494949" fill="none" stroke-width="1" /><path d="M1400.5 48V94" stroke="#494949" fill="none" stroke-width="1" /><path d="M327.5 66.0V52.5H341" stroke="#cdcdcd" fill="none" stroke-width="1.2" /><path d="M329 65.5H341M340.5 54.0V65.5" stroke="#cdcdcd" fill="none" stroke-width="1.2" stroke-dasharray="1.2 1.3"/><path d="M329.5 58.1h6v-2.6l4 3.5l-4 3.5v-2.6h-6z" fill="#cdcdcd"/><path d="M327.5 92.0V78.5H341" stroke="#cdcdcd" fill="none" stroke-width="1.2" /><path d="M329 91.5H341M340.5 80.0V91.5" stroke="#cdcdcd" fill="none" stroke-width="1.2" stroke-dasharray="1.2 1.3"/><path d="M333.2 80.5h1.8v6h2.6l-3.5 4l-3.5 -4h2.6z" fill="#cdcdcd"/><path d="M479.6 54.5L471.2 62.6H482" stroke="#cdcdcd" fill="none" stroke-width="1.7" /><path d="M477.2 57.4A5 5 0 0 1 479.6 62.4" stroke="#cdcdcd" fill="none" stroke-width="1" /><path d="M475.4 81H482.2L478 90.2H471.2Z" fill="#cdcdcd"/><path d="M590.8 59.5A7.4 7.4 0 0 1 603.5 54" stroke="#8f8f8f" fill="none" stroke-width="1.6" /><path d="M606 50.8V56.8H600Z" fill="#8f8f8f"/><path d="M591.2 61.5A7.4 7.4 0 0 0 605.2 61" stroke="#8f8f8f" fill="none" stroke-width="1.3" stroke-dasharray="1.2 1.6"/><path d="M632.2 59.5A7.4 7.4 0 0 0 619.5 54" stroke="#8f8f8f" fill="none" stroke-width="1.6" /><path d="M617 50.8V56.8H623Z" fill="#8f8f8f"/><path d="M631.8 61.5A7.4 7.4 0 0 1 617.8 61" stroke="#8f8f8f" fill="none" stroke-width="1.3" stroke-dasharray="1.2 1.6"/><path d="M589.6 79.6V89.8L594.6 84.7Z" stroke="#8f8f8f" fill="none" stroke-width="1.1" /><path d="M606 78.6V90.8L600 84.7Z" fill="#8f8f8f"/><path d="M597.5 77V92.5" stroke="#8f8f8f" fill="none" stroke-width="1.2" stroke-dasharray="1.2 1.2"/><path d="M620 77.1H630L625 82Z" stroke="#8f8f8f" fill="none" stroke-width="1.1" /><path d="M619 92.6H631L625 86.8Z" fill="#8f8f8f"/><path d="M617 84.5H632.5" stroke="#8f8f8f" fill="none" stroke-width="1.2" stroke-dasharray="1.2 1.2"/><path d="M645.5 63.5V59.5H649.5M665.5 59.5H669.5V63.5M669.5 79.5V83.5H665.5M649.5 83.5H645.5V79.5" stroke="#9c9c9c" fill="none" stroke-width="1.2" /><path d="M693 56.5h3v3.6h-3zM694.5 60v2.5M689.5 64v-2h10v2M694.5 62v2M688.5 64h2.4v2.2h-2.4zM693.3 64h2.4v2.2h-2.4zM698.1 64h2.4v2.2h-2.4z" stroke="#9a9a9a" fill="none" stroke-width="1" /><path d="M690.5 54.2L694.5 50.2L698.5 54.2Z" fill="#9a9a9a"/><path d="M693 77.5h3v3.6h-3zM694.5 81v2.5M689.5 85v-2h10v2M694.5 83v2M688.5 85h2.4v2.2h-2.4zM693.3 85h2.4v2.2h-2.4zM698.1 85h2.4v2.2h-2.4z" stroke="#9a9a9a" fill="none" stroke-width="1" /><path d="M690.5 89L694.5 93L698.5 89Z" fill="#9a9a9a"/><path d="M723 53.5h3v3.6h-3zM724.5 57v2.5M719.5 61v-2h10v2M724.5 59v2M718.5 61h2.4v2.2h-2.4zM723.3 61h2.4v2.2h-2.4zM728.1 61h2.4v2.2h-2.4z" stroke="#cdcdcd" fill="none" stroke-width="1" /><path d="M716.8 55V62.6L712.8 58.8Z" fill="#cdcdcd"/><path d="M718 80.5h3v3.6h-3zM719.5 84v2.5M714.5 88v-2h10v2M719.5 86v2M713.5 88h2.4v2.2h-2.4zM718.3 88h2.4v2.2h-2.4zM723.1 88h2.4v2.2h-2.4z" stroke="#cdcdcd" fill="none" stroke-width="1" /><path d="M727.2 82V89.6L731.2 85.8Z" fill="#cdcdcd"/><path d="M902.4 52.4H908.6A2 2 0 0 0 910.6 54.4V60.6A2 2 0 0 0 908.6 62.6H902.4A2 2 0 0 0 900.4 60.6V54.4A2 2 0 0 0 902.4 52.4Z" stroke="#cdcdcd" fill="none" stroke-width="1.5" /><path d="M911.8 62.2h3.4l-1.7 2z" fill="#cdcdcd"/><path d="M970 62.2h3.4l-1.7 2z" fill="#cdcdcd"/><path d="M1002 51.5H1016M1002 54.5H1016M1002 57.5H1016M1002 60.5H1016M1002 63.5H1016" stroke="#e0e0e0" fill="none" stroke-width="1.1" /><ellipse cx="1009" cy="57.5" rx="3.6" ry="4.6" fill="none" stroke="#e0e0e0" stroke-width="1"/><path d="M1029 51.5H1043M1029 63.5H1043M1029 54.5H1032M1041 54.5H1043M1029 57.5H1032M1041 57.5H1043M1029 60.5H1032M1041 60.5H1043" stroke="#cdcdcd" fill="none" stroke-width="1.1" /><path d="M1034 53.5H1039V61.5H1034Z" stroke="#cdcdcd" fill="none" stroke-width="1.1" /><path d="M1002 78.5H1016M1002 90.5H1016M1002 81.5H1005M1002 84.5H1004M1002 87.5H1005M1013.5 84.5H1016M1013 87.5H1016" stroke="#cdcdcd" fill="none" stroke-width="1.1" /><circle cx="1009" cy="85" r="4" fill="#cdcdcd"/><circle cx="1014" cy="80" r="4" fill="#1473e6"/><path d="M1029 78.5H1043M1029 87.5H1043M1029 90.5H1043" stroke="#cdcdcd" fill="none" stroke-width="1.1" /><rect x="1033" y="80.6" width="6" height="4.2" fill="#cdcdcd"/><rect x="1061" y="52" width="3.4" height="3.4" fill="#2d8ceb"/><rect x="1072" y="52" width="3.4" height="3.4" fill="#2d8ceb"/><rect x="1061" y="63" width="3.4" height="3.4" fill="#2d8ceb"/><rect x="1072" y="63" width="3.4" height="3.4" fill="#2d8ceb"/><path d="M1065 53.7H1071.5M1065 64.7H1071.5M1062.7 56V62.5M1073.7 56V62.5" stroke="#9a9a9a" fill="none" stroke-width="1.3" /><path d="M1083 77.6H1143.5V92" stroke="#111" fill="none" stroke-width="1.2" /><path d="M1187 53H1196.6V62.6H1187Z" stroke="#cdcdcd" fill="none" stroke-width="1.8" stroke-dasharray="1.8 1.4"/><path d="M1197.6 62.2h3.4l-1.7 2z" fill="#cdcdcd"/><path d="M775 54.5L779 58.5L775 62.5M775 80.5L779 84.5L775 88.5M802 55.8L806 51.8L810 55.8M802 61.8L806 65.8L810 61.8M870.5 57L874.5 61L878.5 57M870.5 83L874.5 87L878.5 83M975 80.5L979 84.5L975 88.5M1085 55.8L1089 51.8L1093 55.8M1085 61.8L1089 65.8L1093 61.8M1153.5 83L1157.5 87L1161.5 83M1381.5 57L1385.5 61L1389.5 57" stroke="#dcdcdc" fill="none" stroke-width="1.1" /></svg>
<!-- sec_tools -->
<div style="left:85px;top:131px;width:72px;height:448px;background:#535353;border-radius:4px 4px 0 0;box-shadow:0 1px 4px rgba(0,0,0,.35);border:1px solid #3f3f3f;"></div>
<div style="left:86px;top:132px;width:70px;height:12px;background:#424242;border-radius:4px 4px 0 0;"></div><svg style="left:124px;top:133.5px" width="28" height="9" viewBox="0 0 28 9"><path d="M5.2 2.3L2.7 4.4L5.2 6.5M9 2.3L6.5 4.4L9 6.5" stroke="#d8d8d8" stroke-width="1.3" fill="none"/><path d="M21.3 1.9L26.5 7.1M26.5 1.9L21.3 7.1" stroke="#d8d8d8" stroke-width="1.8" fill="none"/></svg>
<div style="left:86px;top:144px;width:70px;height:1px;background:#3c3c3c;"></div>
<div style="left:111px;top:147px;width:20px;height:5px;background:repeating-linear-gradient(90deg,#3a3a3a 0 1px,transparent 1px 2px);"></div>
<div style="left:88px;top:231px;width:66px;height:1px;background:#484848;"></div>
<div style="left:88px;top:306px;width:66px;height:1px;background:#484848;"></div>
<div style="left:88px;top:357px;width:66px;height:1px;background:#484848;"></div>
<div style="left:88px;top:408px;width:66px;height:1px;background:#484848;"></div>
<div style="left:88px;top:547px;width:66px;height:1px;background:#484848;"></div>
<div style="left:92px;top:159px;width:28px;height:22px;background:#2f2f2f;border-radius:3px;"></div>
<div style="left:100px;top:475px;width:18px;height:17px;background:#2f2f2f;border-radius:3px;"></div>
<div style="left:92px;top:497px;width:18px;height:19px;background:#2f2f2f;border-radius:3px;"></div>
<div style="left:92px;top:550px;width:28px;height:22px;background:#2f2f2f;border-radius:4px;"></div>
<div style="left:98px;top:337px;width:16px;height:14px;border:1px solid #d6d6d6;background:linear-gradient(100deg,#b4b4b4,#6e6e6e 55%,#474747);"></div>
<div style="left:128px;top:337px;width:16px;height:14px;border:1px solid #d6d6d6;background:linear-gradient(180deg,rgba(190,190,190,0) 0%,rgba(190,190,190,.55) 45%,#bebebe 85%),repeating-conic-gradient(#8a8a8a 0 25%,#4c4c4c 0 50%) 0 0/6px 6px;"></div>
<div style="left:114px;top:432px;width:33px;height:33px;background:#000;"></div>
<div style="left:123px;top:441px;width:15px;height:15px;background:#535353;"></div>
<div style="left:95px;top:413px;width:35px;height:35px;background:#cc171a;border:1px solid #f4f4f4;"></div>
<div style="left:99px;top:457px;width:8px;height:8px;background:#111;border:1px solid #e0e0e0;"></div>
<div style="left:102px;top:460px;width:2px;height:2px;background:#535353;"></div>
<div style="left:95px;top:453px;width:8px;height:8px;background:#fff;border:1px solid #d8d8d8;"></div>
<span class="t" style="left:128.2px;top:474.9px;font-size:13px;line-height:17px;font-weight:700;color:#cdcdcd;letter-spacing:0px;font-family:'Liberation Serif', serif;">T</span>
<div style="left:96px;top:501px;width:12px;height:12px;background:#cc171a;border:1px solid #9c9c9c;"></div>
<div style="left:115px;top:501px;width:12px;height:12px;border:1px solid #9c9c9c;background:linear-gradient(90deg,#fff,#2a2a2a);"></div>
<div style="left:135px;top:501px;width:12px;height:12px;background:#fff;border:1px solid #bdbdbd;"></div>
<svg style="left:0;top:0" width="200" height="600"><path d="M101.6 163.2V177.8L112 172.4Z" stroke="#e2e2e2" fill="none" stroke-width="1.2" /><path d="M131 162V179L143.2 172.6Z" fill="#cfcfcf"/><path d="M100.8 186.8H106.8L111.4 191.4V193.5M108 199.3H100.8V186.8M106.6 187V191.6H111.2" stroke="#cfcfcf" fill="none" stroke-width="1.2" /><path d="M109 193.2V201.6L114.9 198.3Z" fill="#cfcfcf"/><path d="M127 187h2.1v14h-2.1zM143 187h2.1v14h-2.1z" fill="#cfcfcf"/><path d="M129.6 193.7l3.6-3.3v2.5h5.7v-2.5l3.6 3.3l-3.6 3.3v-2.5h-5.7v2.5z" fill="#cfcfcf"/><path d="M99 216h2v8h10v-8h2v10h-14z" fill="#cfcfcf"/><path d="M102 218h2v2h-2z" fill="#cfcfcf"/><path d="M108 218h2v2h-2z" fill="#cfcfcf"/><path d="M102 221h2v2h-2z" fill="#cfcfcf"/><path d="M105 221h2v2h-2z" fill="#cfcfcf"/><path d="M108 221h2v2h-2z" fill="#cfcfcf"/><path d="M129 216h2v8h10v-8h2v10h-14z" fill="#cfcfcf"/><path d="M132 218h2v2h-2z" fill="#cfcfcf"/><path d="M135 218h2v2h-2z" fill="#cfcfcf"/><path d="M138 218h2v2h-2z" fill="#cfcfcf"/><path d="M132 221h2v2h-2z" fill="#cfcfcf"/><path d="M135 221h2v2h-2z" fill="#cfcfcf"/><path d="M138 221h2v2h-2z" fill="#cfcfcf"/><path d="M101 210.3L105.6 214.9" stroke="#cfcfcf" fill="none" stroke-width="1.6" /><path d="M107 211.2V216.3H101.9Z" fill="#cfcfcf"/><path d="M136.6 215.4L141 211" stroke="#cfcfcf" fill="none" stroke-width="1.6" /><path d="M137.3 210H142.5V215.2Z" fill="#cfcfcf"/><path d="M99 238h14v4h-2v-2h-4v10h2v2h-6v-2h2v-10h-4v2h-2z" fill="#cfcfcf"/><path d="M119 252V255H116Z" fill="#d8d8d8"/><path d="M128.8 251.8L143.2 237.6" stroke="#cfcfcf" fill="none" stroke-width="1.5" /><path d="M97.8 276.9C98.6 273 100 269.6 101.6 267L106.2 264.4L111 269.2L108.6 273.4C106 275 102.2 276.4 98.4 277.2L103.6 271.8L103 271.2Z" fill="#cfcfcf"/><path d="M107.1 263.4L109.8 260.8L114.2 265.2L111.8 267.9Z" fill="#cfcfcf"/><path d="M119 276V279H116Z" fill="#d8d8d8"/><path d="M127.9 277.1L129.4 271.6L137.8 263.4L142 267.6L133.4 275.8ZM130.6 273.6L130 276L132.2 275.2Z" fill="#cfcfcf"/><path d="M138.8 262.4L140.8 260.6C141.4 260.2 142 260.2 142.6 260.8L144.4 262.6C145 263.2 145 263.8 144.4 264.6L142.8 266.5Z" fill="#cfcfcf"/><path d="M149 276V279H146Z" fill="#d8d8d8"/><path d="M98.6 286.6H113.6V299.6H98.6ZM98.6 286.6L113.6 299.6M113.6 286.6L98.6 299.6" stroke="#cfcfcf" fill="none" stroke-width="1.2" /><path d="M119 301V304H116Z" fill="#d8d8d8"/><rect x="128.6" y="286.6" width="15" height="13" fill="#6f6f6f" stroke="#cfcfcf" stroke-width="1.2"/><path d="M149 301V304H146Z" fill="#d8d8d8"/><path d="M98 315.9L109.6 323" stroke="#cfcfcf" fill="none" stroke-width="2.2" stroke-linecap="round"/><path d="M98 324.1L109.6 317" stroke="#cfcfcf" fill="none" stroke-width="2.2" stroke-linecap="round"/><circle cx="112" cy="315" r="2.6" fill="none" stroke="#cfcfcf" stroke-width="1.3"/><circle cx="112" cy="325" r="2.6" fill="none" stroke="#cfcfcf" stroke-width="1.3"/><path d="M133.5 314H145V326H133.5Z" stroke="#cfcfcf" fill="none" stroke-width="1" /><path d="M132 312.5h2v2h-2z" fill="#e0e0e0"/><path d="M138 312.5h2v2h-2z" fill="#e0e0e0"/><path d="M144 312.5h2v2h-2z" fill="#e0e0e0"/><path d="M144 319h2v2h-2z" fill="#e0e0e0"/><path d="M132 325h2v2h-2z" fill="#e0e0e0"/><path d="M138 325h2v2h-2z" fill="#e0e0e0"/><path d="M144 325h2v2h-2z" fill="#e0e0e0"/><path d="M127 311.4V325L136.6 320.4Z" fill="#cfcfcf"/><path d="M149 327V330H146Z" fill="#d8d8d8"/><path d="M99 364H113V373.6H108.6V378H99Z" fill="#cfcfcf"/><path d="M109.4 374.4H113L109.4 378Z" fill="#e0e0e0"/><path d="M102 367.5H110M102 370.5H110M102 373.5H106" stroke="#4a4a4a" fill="none" stroke-width="1.1" /><path d="M138.2 367.4L129.4 375.6C128 376.8 128 378.2 128.8 378.8C129.6 379.6 131 379.4 132 378.2L140.6 369.6" stroke="#cfcfcf" fill="none" stroke-width="1.3" /><path d="M131.6 376L137.6 370" stroke="#6c6c6c" fill="none" stroke-width="1.4" stroke-dasharray="0.7 0.7"/><path d="M135.8 364.8L142.8 371.8" stroke="#cfcfcf" fill="none" stroke-width="2.4" /><path d="M138.6 366.4L140.4 363.4C141.4 362.2 143 362 144 363C145.2 364 145 365.8 143.8 366.8L141 369Z" fill="#cfcfcf"/><path d="M149 378V381H146Z" fill="#d8d8d8"/><path transform="translate(0 .8)" d="M102.6 394.6L101.6 388.8C101.4 387.6 103 387.2 103.4 388.4L104.8 393L105 387C105 385.8 106.8 385.8 106.9 387L107.3 392.8L108.6 387.8C108.9 386.6 110.6 387 110.4 388.2L109.6 393.6L112.2 390.4C113 389.4 114.4 390.4 113.8 391.4L111 396.6C110.4 399.2 109.8 401 108.6 402.6H103.2C101.6 400.6 100 398.4 98 396.2C97.2 395.2 98.4 394 99.6 394.6Z" fill="#cfcfcf"/><circle cx="134" cy="393.1" r="5.7" fill="none" stroke="#cfcfcf" stroke-width="1.3"/><path d="M138.6 397.6L143.4 402.4" stroke="#cfcfcf" fill="none" stroke-width="2.4" stroke-linecap="round"/><path d="M142 417.6H146.2V423" stroke="#dadada" fill="none" stroke-width="1.3" /><path d="M142.6 414.6V420.6L139.3 417.6Z" fill="#dadada"/><path d="M143.2 422.2H149.4L146.3 425.6Z" fill="#dadada"/><path d="M96.2 459.8L101.8 454.2" stroke="#e02020" fill="none" stroke-width="1.3" /><rect x="105.5" y="480.5" width="7" height="7" fill="none" stroke="#d8d8d8" stroke-width="1.1"/><path d="M136.2 511.8L145.8 502.2" stroke="#ee1c1c" fill="none" stroke-width="1.5" /><path d="M149 512V515H146Z" fill="#d8d8d8"/><path d="M104 532.6H113.4V538.8H104Z" fill="#cdcdcd"/><path d="M103.6 529V531.4M106.8 529V531.4M110 529V531.4M113 529V531.4M100 533.5H102.4M100 536H102.4M100 538.6H102.4M100 530.8H102.4V529" stroke="#d4d4d4" fill="none" stroke-width="1" /><path d="M119 541V544H116Z" fill="#d8d8d8"/><path d="M101.6 556.6H112.4V566.4H101.6ZM101.6 558.4H112.4" stroke="#d4d4d4" fill="none" stroke-width="1.2" /><rect x="104" y="560" width="4" height="3" fill="#111" stroke="#d4d4d4" stroke-width=".9"/><rect x="106" y="561.8" width="4" height="3" fill="#2f2f2f" stroke="#d4d4d4" stroke-width=".9"/><rect x="131.6" y="556.6" width="10.8" height="9.8" fill="#707070" stroke="#d4d4d4" stroke-width="1.2"/><rect x="132" y="556.6" width="10" height="2.2" fill="#d4d4d4"/><path d="M149 567V570H146Z" fill="#d8d8d8"/></svg>
<!-- sec_swatches -->
<div style="left:251px;top:339px;width:257px;height:269px;background:#535353;border-radius:4px 4px 0 0;box-shadow:0 1px 4px rgba(0,0,0,.35);border:1px solid #3f3f3f;"></div>
<div style="left:252px;top:340px;width:255px;height:13px;background:#424242;border-radius:4px 4px 0 0;"></div><svg style="left:475px;top:342.0px" width="28" height="9" viewBox="0 0 28 9"><path d="M5.2 2.3L2.7 4.4L5.2 6.5M9 2.3L6.5 4.4L9 6.5" stroke="#d8d8d8" stroke-width="1.3" fill="none"/><path d="M21.3 1.9L26.5 7.1M26.5 1.9L21.3 7.1" stroke="#d8d8d8" stroke-width="1.8" fill="none"/></svg>
<div style="left:252px;top:353px;width:255px;height:27px;background:#424242;"></div>
<div style="left:252px;top:353px;width:57px;height:26px;background:#464646;"></div>
<div style="left:252px;top:353px;width:255px;height:1px;background:#3a3a3a;"></div>
<div style="left:252px;top:379px;width:255px;height:1px;background:#3c3c3c;"></div>
<div style="left:308px;top:353px;width:1px;height:26px;background:#3c3c3c;"></div>
<div style="left:309px;top:353px;width:79px;height:27px;background:#535353;"></div>
<span class="t" style="left:264px;top:360.25px;font-size:10.5px;line-height:14.5px;font-weight:700;color:#a2a2a2;letter-spacing:0.332px;">Цвета</span>
<svg style="left:315px;top:361px" width="8" height="12"><path d="M1 4.6L3.5 2L6 4.6M1 7.4L3.5 10L6 7.4" stroke="#c8c8c8" stroke-width="1.1" fill="none"/></svg>
<span class="t" style="left:327px;top:360.25px;font-size:10.5px;line-height:14.5px;font-weight:700;color:#f2f2f2;letter-spacing:0.219px;">Образцы</span>
<div style="left:491px;top:363px;width:10px;height:8px;background:repeating-linear-gradient(180deg,#cfcfcf 0 1px,transparent 1px 2px);"></div>
<div style="left:269px;top:398px;width:18px;height:18px;background:#000;"></div>
<div style="left:274px;top:403px;width:8px;height:8px;background:#535353;"></div>
<div style="left:259px;top:388px;width:19px;height:19px;background:#cc171a;"></div>
<div style="left:297px;top:391px;width:19px;height:19px;background:#2f2f2f;border-radius:3px;"></div>
<span class="t" style="left:322.8px;top:391.9px;font-size:13px;line-height:17px;font-weight:700;color:#cdcdcd;letter-spacing:0px;font-family:'Liberation Serif', serif;">T</span>
<span class="t" style="left:353px;top:394.45px;font-size:10.5px;line-height:14.5px;color:#e6e6e6;letter-spacing:-0.237px;">Оттенок:</span>
<div style="left:399px;top:390px;width:54px;height:21px;background:#454545;border:1px solid #6c6c6c;border-radius:4px;"></div>
<div style="left:433px;top:391px;width:1px;height:19px;background:#6c6c6c;"></div>
<span class="t" style="left:405px;top:393.65px;font-size:10.5px;line-height:14.5px;color:#f0f0f0;letter-spacing:-1.516px;">100</span>
<span class="t" style="left:455.5px;top:394.45px;font-size:10.5px;line-height:14.5px;color:#e6e6e6;letter-spacing:0px;">%</span>
<div style="left:253px;top:420px;width:241px;height:1px;background:#4a4a4a;"></div>
<div style="left:271px;top:424px;width:13px;height:13px;background:#000;border:1px solid #3a3a3a;"></div>
<span class="t" style="left:291px;top:424.65px;font-size:10.5px;line-height:14.5px;color:#e8e8e8;letter-spacing:0.06px;">[Регист-я]</span>
<div style="left:253px;top:442px;width:241px;height:1px;background:#4a4a4a;"></div>
<div style="left:271px;top:446px;width:13px;height:13px;background:#fff;border:1px solid #3a3a3a;"></div>
<span class="t" style="left:291px;top:446.65px;font-size:10.5px;line-height:14.5px;color:#e8e8e8;letter-spacing:-0.232px;">[Бумага]</span>
<div style="left:253px;top:464px;width:241px;height:1px;background:#4a4a4a;"></div>
<div style="left:271px;top:468px;width:13px;height:13px;background:#000;border:1px solid #3a3a3a;"></div>
<span class="t" style="left:291px;top:468.65px;font-size:10.5px;line-height:14.5px;color:#e8e8e8;letter-spacing:0.009px;">[Черный]</span>
<div style="left:452px;top:469px;width:11px;height:11px;border:1px solid #cfcfcf;background:repeating-conic-gradient(#8c8c8c 0 25%,#c4c4c4 0 50%) 0 0/2px 2px;"></div>
<div style="left:253px;top:486px;width:241px;height:1px;background:#4a4a4a;"></div>
<div style="left:271px;top:490px;width:13px;height:13px;background:#00a0e9;border:1px solid #3a3a3a;"></div>
<span class="t" style="left:291px;top:490.65px;font-size:10.5px;line-height:14.5px;color:#e8e8e8;letter-spacing:-0.304px;">C=100 M=0 Y=0 K=0</span>
<div style="left:452px;top:491px;width:11px;height:11px;border:1px solid #cfcfcf;background:repeating-conic-gradient(#8c8c8c 0 25%,#c4c4c4 0 50%) 0 0/2px 2px;"></div>
<div style="left:253px;top:508px;width:241px;height:1px;background:#4a4a4a;"></div>
<div style="left:271px;top:512px;width:13px;height:13px;background:#e4007f;border:1px solid #3a3a3a;"></div>
<span class="t" style="left:291px;top:512.65px;font-size:10.5px;line-height:14.5px;color:#e8e8e8;letter-spacing:-0.304px;">C=0 M=100 Y=0 K=0</span>
<div style="left:452px;top:513px;width:11px;height:11px;border:1px solid #cfcfcf;background:repeating-conic-gradient(#8c8c8c 0 25%,#c4c4c4 0 50%) 0 0/2px 2px;"></div>
<div style="left:253px;top:530px;width:241px;height:1px;background:#4a4a4a;"></div>
<div style="left:271px;top:534px;width:13px;height:13px;background:#fff100;border:1px solid #3a3a3a;"></div>
<span class="t" style="left:291px;top:534.65px;font-size:10.5px;line-height:14.5px;color:#e8e8e8;letter-spacing:-0.304px;">C=0 M=0 Y=100 K=0</span>
<div style="left:452px;top:535px;width:11px;height:11px;border:1px solid #cfcfcf;background:repeating-conic-gradient(#8c8c8c 0 25%,#c4c4c4 0 50%) 0 0/2px 2px;"></div>
<div style="left:253px;top:552px;width:241px;height:22px;background:#4c6684;"></div>
<div style="left:271px;top:556px;width:13px;height:13px;background:#cc171a;border:1px solid #3a3a3a;"></div>
<span class="t" style="left:291px;top:556.65px;font-size:10.5px;line-height:14.5px;font-weight:700;color:#ffffff;letter-spacing:0.476px;">C=15 M=100 Y=100 K=0</span>
<div style="left:452px;top:557px;width:11px;height:11px;border:1px solid #cfcfcf;background:repeating-conic-gradient(#8c8c8c 0 25%,#c4c4c4 0 50%) 0 0/2px 2px;"></div>
<div style="left:494px;top:420px;width:13px;height:154px;background:#4a4a4a;"></div>
<div style="left:496px;top:442px;width:9px;height:78px;background:#686868;border-radius:4.5px;"></div>
<div style="left:253px;top:574px;width:254px;height:1px;background:#474747;"></div>
<div style="left:252px;top:600px;width:255px;height:2px;background:#3a3a3a;"></div>
<div style="left:252px;top:602px;width:255px;height:5px;background:#4f4f4f;"></div>
<div style="left:370px;top:603px;width:20px;height:3px;background:repeating-linear-gradient(90deg,#383838 0 1px,transparent 1px 2px);"></div>
<svg style="left:0;top:0" width="520" height="620"><path d="M282.4 389.6H285.4V393" stroke="#dcdcdc" fill="none" stroke-width="1" /><path d="M283 387.6V391.6L280.8 389.6Z" fill="#dcdcdc"/><path d="M283.4 392.4H287.4L285.4 394.8Z" fill="#dcdcdc"/><rect x="303.5" y="397.5" width="7" height="7" fill="none" stroke="#d8d8d8" stroke-width="1.1"/><path d="M441.2 396.4L445 400.5L441.2 404.6" stroke="#dcdcdc" fill="none" stroke-width="1.1" /><path d="M438.6 434.1L445.4 427.1" stroke="#cfcfcf" fill="none" stroke-width="3.3" /><path d="M436.4 436.3L437.2 432.9L439.8 435.5Z" fill="#cfcfcf"/><path d="M436.6 425.5L446.8 435.7" stroke="#535353" fill="none" stroke-width="2.8" /><path d="M436.6 425.5L446.8 435.7" stroke="#e0e0e0" fill="none" stroke-width="1.1" /><rect x="468.5" y="425.0" width="11" height="11" fill="none" stroke="#cfcfcf" stroke-width="1"/><circle cx="474" cy="430.5" r="3" fill="none" stroke="#cfcfcf" stroke-width="1"/><path d="M474 425.5V435.5M469 430.5H479" stroke="#cfcfcf" fill="none" stroke-width="1" /><path d="M438.6 478.1L445.4 471.1" stroke="#cfcfcf" fill="none" stroke-width="3.3" /><path d="M436.4 480.3L437.2 476.9L439.8 479.5Z" fill="#cfcfcf"/><path d="M436.6 469.5L446.8 479.7" stroke="#535353" fill="none" stroke-width="2.8" /><path d="M436.6 469.5L446.8 479.7" stroke="#e0e0e0" fill="none" stroke-width="1.1" /><rect x="468.5" y="469.0" width="11" height="11" fill="#fff200"/><path d="M468.5 469.0H479.5L474 474.5Z" fill="#ec38c8"/><path d="M468.5 469.0V480.0L474 474.5Z" fill="#16e0f0"/><path d="M468.5 480.0H479.5L474 474.5Z" fill="#111"/><rect x="468.5" y="469.0" width="11" height="11" fill="none" stroke="#e6e6e6" stroke-width="1"/><rect x="468.5" y="491.0" width="11" height="11" fill="#fff200"/><path d="M468.5 491.0H479.5L474 496.5Z" fill="#ec38c8"/><path d="M468.5 491.0V502.0L474 496.5Z" fill="#16e0f0"/><path d="M468.5 502.0H479.5L474 496.5Z" fill="#111"/><rect x="468.5" y="491.0" width="11" height="11" fill="none" stroke="#e6e6e6" stroke-width="1"/><rect x="468.5" y="513.0" width="11" height="11" fill="#fff200"/><path d="M468.5 513.0H479.5L474 518.5Z" fill="#ec38c8"/><path d="M468.5 513.0V524.0L474 518.5Z" fill="#16e0f0"/><path d="M468.5 524.0H479.5L474 518.5Z" fill="#111"/><rect x="468.5" y="513.0" width="11" height="11" fill="none" stroke="#e6e6e6" stroke-width="1"/><rect x="468.5" y="535.0" width="11" height="11" fill="#fff200"/><path d="M468.5 535.0H479.5L474 540.5Z" fill="#ec38c8"/><path d="M468.5 535.0V546.0L474 540.5Z" fill="#16e0f0"/><path d="M468.5 546.0H479.5L474 540.5Z" fill="#111"/><rect x="468.5" y="535.0" width="11" height="11" fill="none" stroke="#e6e6e6" stroke-width="1"/><rect x="468.5" y="557.0" width="11" height="11" fill="#fff200"/><path d="M468.5 557.0H479.5L474 562.5Z" fill="#ec38c8"/><path d="M468.5 557.0V568.0L474 562.5Z" fill="#16e0f0"/><path d="M468.5 568.0H479.5L474 562.5Z" fill="#111"/><rect x="468.5" y="557.0" width="11" height="11" fill="none" stroke="#e6e6e6" stroke-width="1"/><path d="M497 428.2L500.5 424.6L504 428.2" stroke="#8a8a8a" fill="none" stroke-width="1" /><path d="M497 564.6L500.5 568.2L504 564.6" stroke="#8a8a8a" fill="none" stroke-width="1" /><g transform="translate(180.2 -276.3)" fill="none" stroke="#cfcfcf" stroke-width="1.25"><path d="M80.5 863V858.5H89.6V860"/><path d="M82.7 863V860.7H91.5V869.5H86.2"/><path d="M78.9 867.5H82.4"/><path d="M82 864.2L86.2 867.6L82 871Z" fill="#cfcfcf" stroke="none"/><path d="M87 860.8H90V865L88.5 863.8L87 865Z" fill="#cfcfcf" stroke="none"/></g><path d="M387.3 582.3h3v3h-3z" fill="#d2d2d2"/><path d="M391.0 582.3h3v3h-3z" fill="#a4a4a4"/><path d="M394.7 582.3h3v3h-3z" fill="#d2d2d2"/><path d="M387.3 586.0h3v3h-3z" fill="#a4a4a4"/><path d="M391.0 586.0h3v3h-3z" fill="#d2d2d2"/><path d="M394.7 586.0h3v3h-3z" fill="#a4a4a4"/><path d="M387.3 589.6999999999999h3v3h-3z" fill="#d2d2d2"/><path d="M391.0 589.6999999999999h3v3h-3z" fill="#a4a4a4"/><path d="M394.7 589.6999999999999h3v3h-3z" fill="#d2d2d2"/><path d="M399.4 592.6h3.2l-1.6 1.9z" fill="#cfcfcf"/><path d="M414.4 584.6H427.6V594H414.4Z" fill="#cfcfcf"/><path d="M414.4 582.8H419.6V584.6H414.4Z" fill="#cfcfcf"/><path d="M445.6 583.6H455.4V593.4H445.6ZM450.5 586V591M448 588.5H453" stroke="#cfcfcf" fill="none" stroke-width="1.2" /><path d="M472 585.5H483M475.5 585.3V583.5H479.5V585.3M473.3 585.8L473.9 594.3H481.1L481.7 585.8M475.6 587.6V592.4M477.5 587.6V592.4M479.4 587.6V592.4" stroke="#cfcfcf" fill="none" stroke-width="1.1" /></svg>
<!-- sec_pstyles -->
<div style="left:71px;top:654px;width:242px;height:231px;background:#535353;border-radius:4px 4px 0 0;box-shadow:0 1px 4px rgba(0,0,0,.35);border:1px solid #3f3f3f;"></div>
<div style="left:72px;top:655px;width:240px;height:13px;background:#424242;border-radius:4px 4px 0 0;"></div><svg style="left:280px;top:657.0px" width="28" height="9" viewBox="0 0 28 9"><path d="M5.2 2.3L2.7 4.4L5.2 6.5M9 2.3L6.5 4.4L9 6.5" stroke="#d8d8d8" stroke-width="1.3" fill="none"/><path d="M21.3 1.9L26.5 7.1M26.5 1.9L21.3 7.1" stroke="#d8d8d8" stroke-width="1.8" fill="none"/></svg>
<div style="left:72px;top:668px;width:240px;height:27px;background:#424242;"></div>
<div style="left:72px;top:668px;width:91px;height:26px;background:#464646;"></div>
<div style="left:72px;top:668px;width:240px;height:1px;background:#3a3a3a;"></div>
<div style="left:72px;top:694px;width:240px;height:1px;background:#3c3c3c;"></div>
<div style="left:162px;top:668px;width:1px;height:26px;background:#3c3c3c;"></div>
<div style="left:163px;top:668px;width:109px;height:27px;background:#535353;"></div>
<div style="left:72px;top:668px;width:91px;height:26px;overflow:hidden;"><span class="t" style="left:12px;top:7.25px;font-size:10.5px;line-height:14.5px;font-weight:700;color:#a2a2a2;letter-spacing:0.45px;">Стили символов</span></div>
<svg style="left:168px;top:676px" width="8" height="12"><path d="M1 4.6L3.5 2L6 4.6M1 7.4L3.5 10L6 7.4" stroke="#c8c8c8" stroke-width="1.1" fill="none"/></svg>
<span class="t" style="left:180px;top:675.25px;font-size:10.5px;line-height:14.5px;font-weight:700;color:#f2f2f2;letter-spacing:0.159px;">Стили абзацев</span>
<div style="left:296px;top:678px;width:10px;height:8px;background:repeating-linear-gradient(180deg,#cfcfcf 0 1px,transparent 1px 2px);"></div>
<span class="t" style="left:77px;top:701.35px;font-size:10.5px;line-height:14.5px;color:#ececec;letter-spacing:-0.124px;">[основной абзац]</span>
<span class="t" style="left:262px;top:699.85px;font-size:11.5px;line-height:15.5px;color:#bdbdbd;letter-spacing:-1.005px;">[a+]</span>
<div style="left:73px;top:720px;width:239px;height:21px;background:#4c6684;"></div>
<span class="t" style="left:107.4px;top:723.75px;font-size:10.5px;line-height:14.5px;font-weight:700;color:#ffffff;letter-spacing:0.146px;">[основной абзац]</span>
<div style="left:73px;top:851px;width:239px;height:1px;background:#5c5c5c;"></div>
<span class="t" style="left:219.5px;top:855.0px;font-size:13px;line-height:17px;font-weight:700;color:#858585;letter-spacing:0px;">¶</span>
<div style="left:72px;top:876px;width:240px;height:2px;background:#3a3a3a;"></div>
<div style="left:72px;top:878px;width:240px;height:6px;background:#4f4f4f;"></div>
<div style="left:182px;top:879px;width:20px;height:4px;background:repeating-linear-gradient(90deg,#383838 0 1px,transparent 1px 2px);"></div>
<svg style="left:0;top:0" width="330" height="900"><path d="M299.4 701.2L294 709.4H297.4L295.4 715.4L301.8 706.6H298.2L301 701.2Z" fill="#c4c4c4"/><g transform="translate(0 0)" fill="none" stroke="#cfcfcf" stroke-width="1.25"><path d="M80.5 863V858.5H89.6V860"/><path d="M82.7 863V860.7H91.5V869.5H86.2"/><path d="M78.9 867.5H82.4"/><path d="M82 864.2L86.2 867.6L82 871Z" fill="#cfcfcf" stroke="none"/><path d="M87 860.8H90V865L88.5 863.8L87 865Z" fill="#cfcfcf" stroke="none"/></g><path d="M192.4 860.6H205.6V870H192.4Z" fill="#cfcfcf"/><path d="M192.4 858.8H197.6V860.6H192.4Z" fill="#cfcfcf"/><path d="M229.6 867L235.6 861M231 861.6L234.8 866" stroke="#858585" fill="none" stroke-width="1.1" /><path d="M250.6 859.6H260.4V869.4H250.6ZM255.5 862V867M253 864.5H258" stroke="#e2e2e2" fill="none" stroke-width="1.2" /><path d="M277 861.5H288M280.5 861.3V859.5H284.5V861.3M278.3 861.8L278.9 870.3H286.1L286.7 861.8M280.6 863.6V868.4M282.5 863.6V868.4M284.4 863.6V868.4" stroke="#858585" fill="none" stroke-width="1.1" /></svg>
<!-- sec_pages -->
<div style="left:1283px;top:66px;width:141px;height:901px;background:#535353;border-left:1px solid #3c3c3c;"></div>
<div style="left:1283px;top:66px;width:141px;height:3px;background:#3a3a3a;"></div>
<div style="left:1284px;top:69px;width:140px;height:28px;background:#424242;"></div>
<div style="left:1284px;top:69px;width:85px;height:28px;background:#535353;"></div>
<div style="left:1370px;top:69px;width:44px;height:27px;background:#4b4b4b;"></div>
<svg style="left:1291px;top:79px" width="8" height="12"><path d="M1 4.6L3.5 2L6 4.6M1 7.4L3.5 10L6 7.4" stroke="#c8c8c8" stroke-width="1.1" fill="none"/></svg>
<span class="t" style="left:1302px;top:77.25px;font-size:10.5px;line-height:14.5px;font-weight:700;color:#f2f2f2;letter-spacing:0.257px;">Страницы</span>
<div style="left:1370px;top:69px;width:44px;height:27px;overflow:hidden;"><span class="t" style="left:11px;top:8.25px;font-size:10.5px;line-height:14.5px;font-weight:700;color:#9d9d9d;letter-spacing:1.059px;">Инфор</span></div>
<span class="t" style="left:1287.3px;top:104.8px;font-size:10px;line-height:14px;color:#e6e6e6;letter-spacing:0.093px;">[Без шаблона]</span>
<span class="t" style="left:1287.3px;top:133.8px;font-size:10px;line-height:14px;color:#e6e6e6;letter-spacing:-0.15px;">A-Шаблон</span>
<span class="t" style="left:1287.3px;top:162.7px;font-size:10px;line-height:14px;color:#e6e6e6;letter-spacing:-0.15px;">B-Шаблон</span>
<span class="t" style="left:1287.3px;top:191.6px;font-size:10px;line-height:14px;color:#e6e6e6;letter-spacing:-0.3px;">D-7x6 2025</span>
<div style="left:1284px;top:214px;width:140px;height:2px;background:#606060;"></div>
<div style="left:1288px;top:228px;width:5px;height:10px;background:repeating-linear-gradient(180deg,#d0d0d0 0 1px,transparent 1px 2px);"></div>
<span class="t" style="left:1305px;top:226.5px;font-size:10px;line-height:14px;font-weight:700;color:#f4f4f4;letter-spacing:0.068px;">A3 B</span>
<svg style="left:1341px;top:230px" width="10" height="6"><path d="M1 1H8L4.5 4.6Z" fill="#cfcfcf"/></svg>
<div style="left:1354px;top:220px;width:1px;height:25px;background:#6c6c6c;"></div>
<div style="left:1284px;top:247px;width:140px;height:1px;background:#474747;"></div>
<svg style="left:1313px;top:250px" width="13" height="7"><path d="M.8 1H12.2L6.5 6.2Z" fill="#cbcbcb"/></svg>
<div style="left:1307px;top:257px;width:26px;height:36px;background:#86b2e2;border:1px solid #8e9aa6;"></div>
<div style="left:1308px;top:258px;width:24px;height:10px;background:#96b3c8;"></div>
<div style="left:1308px;top:268px;width:24px;height:1px;background:#8fb0cf;"></div>
<div style="left:1308px;top:279px;width:24px;height:1px;background:#9db4c6;"></div>
<div style="left:1319px;top:268px;width:1px;height:24px;background:#9db4c6;"></div>
<div style="left:1308px;top:259px;width:6px;height:3px;background:#3c86a8;opacity:.8;"></div>
<div style="left:1327px;top:259px;width:4px;height:3px;background:#3c86a8;opacity:.8;"></div>
<div style="left:1315px;top:258px;width:11px;height:10px;background:#fff;"></div>
<span class="t" style="left:1317.3px;top:257.2px;font-size:9px;line-height:13px;font-weight:700;color:#000;letter-spacing:0px;">B</span>
<div style="left:1312px;top:298px;width:12px;height:14px;background:#2b85ec;"></div>
<span class="t" style="left:1315px;top:298.25px;font-size:10.5px;line-height:14.5px;font-weight:700;color:#fff;letter-spacing:0px;">1</span>
<div style="left:1307px;top:321px;width:26px;height:36px;background:#c9c9c9;border:1px solid #f2f2f2;"></div>
<div style="left:1308px;top:350px;width:24px;height:6px;background:#fff;"></div>
<div style="left:1312px;top:352px;width:5px;height:1.4px;background:#cf5a4e;"></div>
<div style="left:1318px;top:352px;width:9px;height:3px;background:repeating-linear-gradient(90deg,#9a9a9a 0 1px,#fff 1px 2px);opacity:.8;"></div>
<div style="left:1323px;top:352px;width:2px;height:3px;background:#d46a6a;"></div>
<div style="left:1316px;top:322px;width:10px;height:10px;background:#fff;"></div>
<span class="t" style="left:1317.8px;top:321.5px;font-size:9px;line-height:13px;font-weight:700;color:#000;letter-spacing:0px;">E</span>
<span class="t" style="left:1315px;top:362.25px;font-size:10.5px;line-height:14.5px;color:#ececec;letter-spacing:0px;">2</span>
<div style="left:1307px;top:385px;width:26px;height:36px;background:#c9c9c9;border:1px solid #f2f2f2;"></div>
<div style="left:1308px;top:414px;width:24px;height:6px;background:#fff;"></div>
<div style="left:1312px;top:416px;width:5px;height:1.4px;background:#cf5a4e;"></div>
<div style="left:1318px;top:416px;width:9px;height:3px;background:repeating-linear-gradient(90deg,#9a9a9a 0 1px,#fff 1px 2px);opacity:.8;"></div>
<div style="left:1323px;top:416px;width:2px;height:3px;background:#d46a6a;"></div>
<div style="left:1316px;top:386px;width:10px;height:10px;background:#fff;"></div>
<span class="t" style="left:1317.8px;top:385.5px;font-size:9px;line-height:13px;font-weight:700;color:#000;letter-spacing:0px;">E</span>
<span class="t" style="left:1315px;top:426.25px;font-size:10.5px;line-height:14.5px;color:#ececec;letter-spacing:0px;">3</span>
<div style="left:1307px;top:449px;width:26px;height:36px;background:#c9c9c9;border:1px solid #f2f2f2;"></div>
<div style="left:1308px;top:478px;width:24px;height:6px;background:#fff;"></div>
<div style="left:1312px;top:480px;width:5px;height:1.4px;background:#cf5a4e;"></div>
<div style="left:1318px;top:480px;width:9px;height:3px;background:repeating-linear-gradient(90deg,#9a9a9a 0 1px,#fff 1px 2px);opacity:.8;"></div>
<div style="left:1323px;top:480px;width:2px;height:3px;background:#d46a6a;"></div>
<div style="left:1316px;top:450px;width:10px;height:10px;background:#fff;"></div>
<span class="t" style="left:1317.8px;top:449.5px;font-size:9px;line-height:13px;font-weight:700;color:#000;letter-spacing:0px;">E</span>
<span class="t" style="left:1315px;top:490.25px;font-size:10.5px;line-height:14.5px;color:#ececec;letter-spacing:0px;">4</span>
<div style="left:1307px;top:513px;width:26px;height:36px;background:#c9c9c9;border:1px solid #f2f2f2;"></div>
<div style="left:1308px;top:542px;width:24px;height:6px;background:#fff;"></div>
<div style="left:1312px;top:544px;width:5px;height:1.4px;background:#cf5a4e;"></div>
<div style="left:1318px;top:544px;width:9px;height:3px;background:repeating-linear-gradient(90deg,#9a9a9a 0 1px,#fff 1px 2px);opacity:.8;"></div>
<div style="left:1323px;top:544px;width:2px;height:3px;background:#d46a6a;"></div>
<div style="left:1316px;top:514px;width:10px;height:10px;background:#fff;"></div>
<span class="t" style="left:1317.8px;top:513.5px;font-size:9px;line-height:13px;font-weight:700;color:#000;letter-spacing:0px;">E</span>
<span class="t" style="left:1315px;top:554.25px;font-size:10.5px;line-height:14.5px;color:#ececec;letter-spacing:0px;">5</span>
<div style="left:1307px;top:577px;width:26px;height:36px;background:#c9c9c9;border:1px solid #f2f2f2;"></div>
<div style="left:1308px;top:606px;width:24px;height:6px;background:#fff;"></div>
<div style="left:1312px;top:608px;width:5px;height:1.4px;background:#cf5a4e;"></div>
<div style="left:1318px;top:608px;width:9px;height:3px;background:repeating-linear-gradient(90deg,#9a9a9a 0 1px,#fff 1px 2px);opacity:.8;"></div>
<div style="left:1323px;top:608px;width:2px;height:3px;background:#d46a6a;"></div>
<div style="left:1316px;top:578px;width:10px;height:10px;background:#fff;"></div>
<span class="t" style="left:1317.8px;top:577.5px;font-size:9px;line-height:13px;font-weight:700;color:#000;letter-spacing:0px;">E</span>
<span class="t" style="left:1315px;top:618.25px;font-size:10.5px;line-height:14.5px;color:#ececec;letter-spacing:0px;">6</span>
<div style="left:1307px;top:641px;width:26px;height:36px;background:#c9c9c9;border:1px solid #f2f2f2;"></div>
<div style="left:1308px;top:670px;width:24px;height:6px;background:#fff;"></div>
<div style="left:1312px;top:672px;width:5px;height:1.4px;background:#cf5a4e;"></div>
<div style="left:1318px;top:672px;width:9px;height:3px;background:repeating-linear-gradient(90deg,#9a9a9a 0 1px,#fff 1px 2px);opacity:.8;"></div>
<div style="left:1323px;top:672px;width:2px;height:3px;background:#d46a6a;"></div>
<div style="left:1316px;top:642px;width:10px;height:10px;background:#fff;"></div>
<span class="t" style="left:1317.8px;top:641.5px;font-size:9px;line-height:13px;font-weight:700;color:#000;letter-spacing:0px;">E</span>
<span class="t" style="left:1315px;top:682.25px;font-size:10.5px;line-height:14.5px;color:#ececec;letter-spacing:0px;">7</span>
<div style="left:1307px;top:705px;width:26px;height:36px;background:#c9c9c9;border:1px solid #f2f2f2;"></div>
<div style="left:1308px;top:734px;width:24px;height:6px;background:#fff;"></div>
<div style="left:1312px;top:736px;width:5px;height:1.4px;background:#cf5a4e;"></div>
<div style="left:1318px;top:736px;width:9px;height:3px;background:repeating-linear-gradient(90deg,#9a9a9a 0 1px,#fff 1px 2px);opacity:.8;"></div>
<div style="left:1323px;top:736px;width:2px;height:3px;background:#d46a6a;"></div>
<div style="left:1316px;top:706px;width:10px;height:10px;background:#fff;"></div>
<span class="t" style="left:1317.8px;top:705.5px;font-size:9px;line-height:13px;font-weight:700;color:#000;letter-spacing:0px;">E</span>
<span class="t" style="left:1315px;top:746.25px;font-size:10.5px;line-height:14.5px;color:#ececec;letter-spacing:0px;">8</span>
<div style="left:1307px;top:769px;width:26px;height:36px;background:#c9c9c9;border:1px solid #f2f2f2;"></div>
<div style="left:1308px;top:798px;width:24px;height:6px;background:#fff;"></div>
<div style="left:1312px;top:800px;width:5px;height:1.4px;background:#cf5a4e;"></div>
<div style="left:1318px;top:800px;width:9px;height:3px;background:repeating-linear-gradient(90deg,#9a9a9a 0 1px,#fff 1px 2px);opacity:.8;"></div>
<div style="left:1323px;top:800px;width:2px;height:3px;background:#d46a6a;"></div>
<div style="left:1316px;top:770px;width:10px;height:10px;background:#fff;"></div>
<span class="t" style="left:1317.8px;top:769.5px;font-size:9px;line-height:13px;font-weight:700;color:#000;letter-spacing:0px;">E</span>
<span class="t" style="left:1315px;top:810.25px;font-size:10.5px;line-height:14.5px;color:#ececec;letter-spacing:0px;">9</span>
<div style="left:1307px;top:833px;width:26px;height:36px;background:#c9c9c9;border:1px solid #f2f2f2;"></div>
<div style="left:1308px;top:862px;width:24px;height:6px;background:#fff;"></div>
<div style="left:1312px;top:864px;width:5px;height:1.4px;background:#cf5a4e;"></div>
<div style="left:1318px;top:864px;width:9px;height:3px;background:repeating-linear-gradient(90deg,#9a9a9a 0 1px,#fff 1px 2px);opacity:.8;"></div>
<div style="left:1323px;top:864px;width:2px;height:3px;background:#d46a6a;"></div>
<div style="left:1316px;top:834px;width:10px;height:10px;background:#fff;"></div>
<span class="t" style="left:1317.8px;top:833.5px;font-size:9px;line-height:13px;font-weight:700;color:#000;letter-spacing:0px;">E</span>
<span class="t" style="left:1312.5px;top:874.25px;font-size:10.5px;line-height:14.5px;color:#ececec;letter-spacing:-0.688px;">10</span>
<div style="left:1307px;top:897px;width:26px;height:24px;background:#c9c9c9;border:1px solid #f2f2f2;border-bottom:none;"></div>
<div style="left:1316px;top:898px;width:10px;height:10px;background:#fff;"></div>
<span class="t" style="left:1317.8px;top:897.5px;font-size:9px;line-height:13px;font-weight:700;color:#000;letter-spacing:0px;">E</span>
<svg style="left:1288px;top:922px" width="6" height="10"><path d="M4.5 1L1.2 5L4.5 9" stroke="#5e5e5e" stroke-width="1" fill="none"/></svg>
<div style="left:1284px;top:933px;width:140px;height:1px;background:#5d5d5d;"></div>
<span class="t" style="left:1289px;top:940.75px;font-size:10.5px;line-height:14.5px;color:#eaeaea;letter-spacing:-0.334px;">Страниц 13, разворотов 13</span>
<div style="left:1283px;top:957px;width:141px;height:3px;background:#3c3c3c;"></div>
<div style="left:1283px;top:960px;width:141px;height:7px;background:#4f4f4f;border-left:1px solid #3c3c3c;border-bottom:1px solid #3a3a3a;"></div>
<div style="left:1394px;top:961px;width:20px;height:4px;background:repeating-linear-gradient(90deg,#383838 0 1px,transparent 1px 2px);"></div>
<div style="left:7px;top:42px;width:1px;height:933px;background:#424242;"></div>
</div>
</body></html>
